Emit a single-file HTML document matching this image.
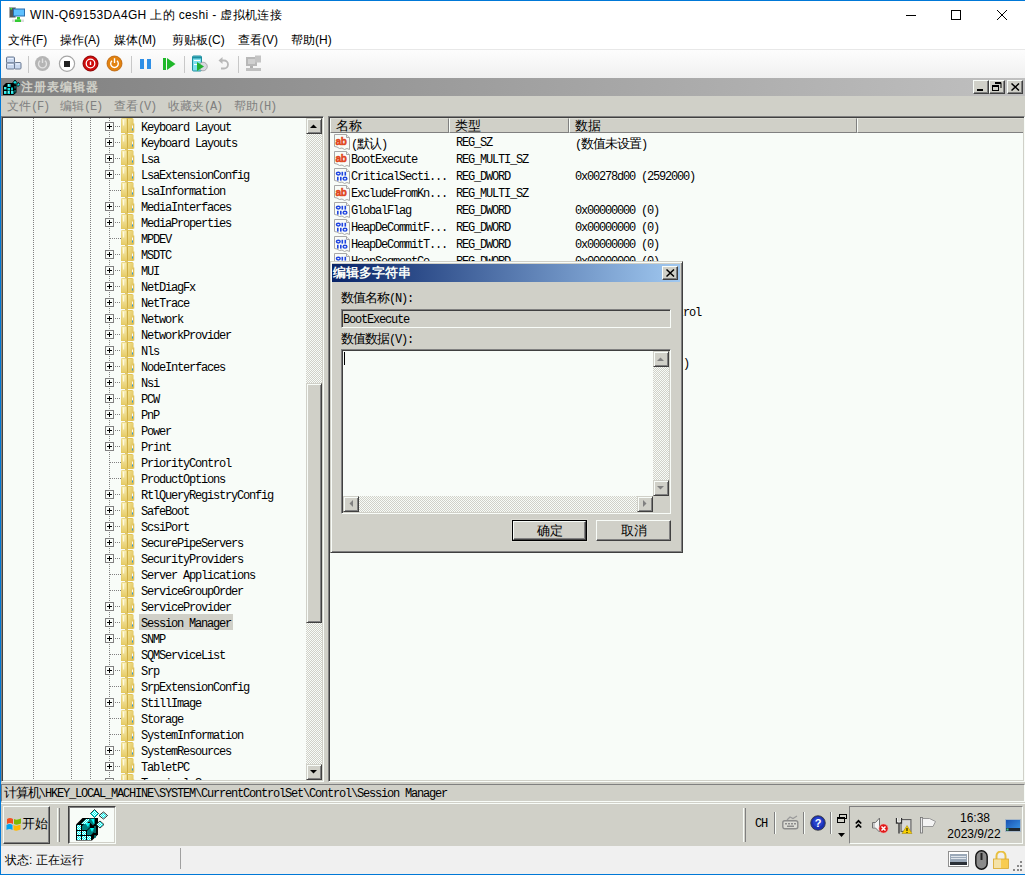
<!DOCTYPE html>
<html><head><meta charset="utf-8">
<style>
*{margin:0;padding:0;box-sizing:border-box}
html,body{width:1025px;height:875px;overflow:hidden;background:#fff;position:relative;font-family:"Liberation Sans",sans-serif;font-size:12px;color:#000}
div{position:absolute}
.a{position:absolute}
/* host window */
#bt{left:0;top:0;width:1025px;height:1px;background:#0078d7}
#bl{left:0;top:0;width:1px;height:875px;background:#0078d7}
#bb{left:0;top:874px;width:1025px;height:1px;background:#0078d7}
.ttl{left:30px;top:7px;font-size:12px;letter-spacing:0.35px;white-space:nowrap;line-height:16px}
.mi{top:32px;font-size:12px;white-space:nowrap;line-height:16px}
#tb{left:1px;top:49px;width:1024px;height:29px;background:linear-gradient(#fdfdfd,#f0f0f0);border-top:1px solid #e8e8e8}
.tsep{top:56px;width:1px;height:17px;background:#c8c8c8}
/* vm */
#vm{left:1px;top:78px;width:1024px;height:768px;background:#d0d0c8;overflow:hidden}
.sunk{border:1px solid;border-color:#808080 #f8fcf8 #f8fcf8 #808080;box-shadow:inset 1px 1px #404040,inset -1px -1px #d0d0c8}
.rais{background:#d0d0c8;border:1px solid;border-color:#d0d0c8 #404040 #404040 #d0d0c8;box-shadow:inset 1px 1px #f8fcf8,inset -1px -1px #808080}
.push{background:#d0d0c8;border:1px solid;border-color:#f8fcf8 #404040 #404040 #f8fcf8;box-shadow:inset -1px -1px #808080}
.chk{background:repeating-conic-gradient(#d0d0c8 0 25%,#f8fcf8 0 50%) 0 0/2px 2px}
.mono{font-family:"Liberation Mono",monospace;font-size:12px;letter-spacing:-1.2px;white-space:nowrap;line-height:16px}
.pbox{left:105px;width:9px;height:9px;border:1px solid #808080;background:#f8fcf8}
.pbox:before{content:"";position:absolute;left:1px;top:3px;width:5px;height:1px;background:#000}
.pbox:after{content:"";position:absolute;left:3px;top:1px;width:1px;height:5px;background:#000}
.hdot{height:1px;background:repeating-linear-gradient(90deg,#808080 0 1px,transparent 1px 2px)}
.vdot{width:1px;background:repeating-linear-gradient(180deg,#808080 0 1px,transparent 1px 2px)}
.fold{left:121px;width:16px;height:16px}
.fold svg{position:absolute;left:0;top:0}
.ti{left:139px;height:16px;padding:0 2px;font-family:"Liberation Mono",monospace;font-size:12px;letter-spacing:-1.2px;white-space:nowrap;line-height:16px}
.ti.sel{background:#d0d0c8}
.li-ic{left:334px;width:16px;height:16px}
.lt{font-family:"Liberation Mono",monospace;font-size:12px;letter-spacing:-1.2px;white-space:nowrap;line-height:17px;height:17px}
.cjk{font-family:"Liberation Sans",sans-serif;font-size:13px;letter-spacing:-1px}
.hdx{top:118px;height:15px;font-size:12px;line-height:15px;padding-left:7px;white-space:nowrap}
.m{font-family:"Liberation Mono",monospace;font-size:12px;letter-spacing:-1.2px;white-space:nowrap}
.rmenu{top:98px;color:#808080;line-height:16px;white-space:nowrap}
.hdr{top:118px;height:15px;background:#d0d0c8;border-style:solid;border-width:1px;border-color:#dcdcd4 #808080 #808080 #f8fcf8;padding-left:5px;line-height:13px;font-size:13px;white-space:nowrap}
</style></head><body>
<div id="bt"></div><div id="bl"></div><div id="bb"></div>
<!-- title bar -->
<div class="a" style="left:9px;top:7px;width:16px;height:16px">
<svg width="16" height="16" viewBox="0 0 16 16"><rect x="0.5" y="0.5" width="6" height="10" fill="#555" stroke="#aaa" stroke-width="0.6"/><rect x="1.5" y="1" width="1.5" height="1.5" fill="#3f3"/><rect x="4" y="1.5" width="12" height="8" fill="#2a6fb0"/><rect x="5" y="2.5" width="10" height="6" fill="#5ec0ff"/><rect x="8" y="10" width="3" height="3" fill="#3c3"/><rect x="3" y="12.5" width="12" height="2.5" fill="#ddd"/><rect x="6" y="12.5" width="6" height="2.5" fill="#3c3"/></svg></div>
<div class="a ttl">WIN-Q69153DA4GH 上的 ceshi - 虚拟机连接</div>
<div class="a" style="left:906px;top:15px;width:10px;height:1px;background:#000"></div>
<div class="a" style="left:951px;top:10px;width:10px;height:10px;border:1px solid #000"></div>
<div class="a" style="left:996px;top:9px;width:12px;height:12px"><svg width="12" height="12"><path d="M1 1L11 11M11 1L1 11" stroke="#000" stroke-width="1"/></svg></div>
<!-- menu -->
<div class="a mi" style="left:8px">文件(F)</div>
<div class="a mi" style="left:60px">操作(A)</div>
<div class="a mi" style="left:114px">媒体(M)</div>
<div class="a mi" style="left:172px">剪贴板(C)</div>
<div class="a mi" style="left:238px">查看(V)</div>
<div class="a mi" style="left:291px">帮助(H)</div>
<!-- toolbar -->
<div id="tb"></div>
<div class="a" style="left:6px;top:56px;width:16px;height:14px"><svg width="16" height="14" viewBox="0 0 16 14"><rect x="0.5" y="1" width="8" height="6" rx="1" fill="#c9d8ef" stroke="#6b7a92"/><rect x="0.5" y="7" width="8" height="6" rx="1" fill="#c9d8ef" stroke="#6b7a92"/><rect x="8.5" y="6.5" width="6.5" height="6.5" rx="1" fill="#c9d8ef" stroke="#6b7a92"/><rect x="2" y="2" width="5" height="1" fill="#eef4ff"/><rect x="2" y="8" width="5" height="1" fill="#eef4ff"/><rect x="10" y="7.5" width="4" height="1" fill="#eef4ff"/></svg></div>
<div class="a tsep" style="left:28px"></div>
<div class="a" style="left:34px;top:55px;width:17px;height:17px"><svg width="17" height="17" viewBox="0 0 17 17"><circle cx="8.5" cy="8.5" r="7.5" fill="#b5b5b5"/><path d="M6 5.8a4 4 0 1 0 5 0" fill="none" stroke="#e2e2e2" stroke-width="1.4"/><path d="M8.5 3.5v4.5" stroke="#e2e2e2" stroke-width="1.4"/></svg></div>
<div class="a" style="left:58px;top:55px;width:18px;height:18px"><svg width="18" height="18" viewBox="0 0 18 18"><circle cx="9" cy="8.8" r="7.6" fill="#fff" stroke="#a6a6a6" stroke-width="1.2"/><rect x="6" y="6" width="6" height="6" fill="#222"/></svg></div>
<div class="a" style="left:82px;top:55px;width:17px;height:17px"><svg width="17" height="17" viewBox="0 0 17 17"><circle cx="8.5" cy="8.5" r="7.5" fill="#cf0a0a" stroke="#8a0000" stroke-width="1"/><circle cx="8.5" cy="8.5" r="4.3" fill="none" stroke="#fff" stroke-width="1.3"/><rect x="7.8" y="6.5" width="1.4" height="3.5" fill="#fff"/></svg></div>
<div class="a" style="left:106px;top:55px;width:17px;height:17px"><svg width="17" height="17" viewBox="0 0 17 17"><circle cx="8.5" cy="8.5" r="7.5" fill="#e2820f" stroke="#b86008" stroke-width="0.8"/><path d="M6 5.8a3.8 3.8 0 1 0 5 0" fill="none" stroke="#fff" stroke-width="1.4"/><path d="M8.5 3.2v4.8" stroke="#fff" stroke-width="1.4"/></svg></div>
<div class="a tsep" style="left:131px"></div>
<div class="a" style="left:140px;top:59px;width:4px;height:10px;background:#2f8fe6"></div>
<div class="a" style="left:147px;top:59px;width:4px;height:10px;background:#2f8fe6"></div>
<div class="a" style="left:163px;top:58px;width:13px;height:12px"><svg width="13" height="12" viewBox="0 0 13 12"><rect x="0" y="0" width="3" height="12" fill="#1fb82a"/><path d="M4 0l8.5 6L4 12z" fill="#1fb82a"/></svg></div>
<div class="a tsep" style="left:184px"></div>
<div class="a" style="left:191px;top:55px;width:17px;height:17px"><svg width="17" height="17" viewBox="0 0 17 17"><rect x="1.5" y="1" width="9" height="15" rx="1" fill="#7fe0ee" stroke="#1f8fa0"/><rect x="2" y="1.5" width="8" height="2" fill="#1f8fa0"/><rect x="3" y="5" width="6" height="1" fill="#fff"/><rect x="3" y="9" width="6" height="1" fill="#fff"/><circle cx="12" cy="11.5" r="4.3" fill="#d8d8e0" stroke="#888" stroke-width="0.6"/><path d="M6 7l7 4.5L6 16z" fill="#22b030"/></svg></div>
<div class="a" style="left:218px;top:56px;width:12px;height:15px"><svg width="12" height="15" viewBox="0 0 12 15"><path d="M3 4.5h3a4 4 0 0 1 0 8H3" fill="none" stroke="#b8b8b8" stroke-width="1.8"/><path d="M0.5 4.5l4-3.5v7z" fill="#b8b8b8"/></svg></div>
<div class="a tsep" style="left:238px"></div>
<div class="a" style="left:245px;top:55px;width:17px;height:17px"><svg width="17" height="17" viewBox="0 0 17 17"><rect x="1" y="2" width="11" height="9" fill="#b8b8b8"/><rect x="3" y="4" width="7" height="5" fill="#d0d0d0"/><rect x="10" y="0.5" width="6" height="7" fill="#c4c4c4"/><rect x="5" y="11" width="3" height="2" fill="#b0b0b0"/><rect x="1" y="13" width="15" height="3" fill="#c0c0c0"/></svg></div>

<!-- VM -->
<div id="vm"></div>
<!-- reg title -->
<div class="a" style="left:1px;top:78px;width:1024px;height:18px;background:linear-gradient(90deg,#808080,#c0c0c0)"></div>
<div class="a" style="left:3px;top:79px;width:17px;height:17px"><svg width="17" height="17" viewBox="0 0 17 17"><path d="M0 16V7l3-3h8l2.5 2v7.5L10.5 16z" fill="#000"/><rect x="1" y="8" width="2.5" height="2.5" fill="#10e0e0"/><rect x="4.5" y="5" width="3" height="3" fill="#10e0e0"/><rect x="1" y="12" width="2.5" height="3" fill="#10e0e0"/><rect x="4.5" y="12" width="2.5" height="3" fill="#10e0e0"/><rect x="8" y="12" width="2.5" height="3" fill="#10e0e0"/><rect x="4.5" y="9" width="2.5" height="2.5" fill="#10e0e0"/><rect x="8" y="8.5" width="2" height="3" fill="#10c8c8"/><rect x="11.5" y="7" width="1" height="2.5" fill="#10a0a0"/><rect x="11.5" y="11" width="1" height="2.5" fill="#10a0a0"/><path d="M10 3.5l2-2.5 2 2.5-2 2z" fill="#10e0e0" stroke="#000" stroke-width="0.9"/><path d="M13.5 6l2-2.5 1.5 2-2 2z" fill="#10e0e0" stroke="#000" stroke-width="0.9"/><rect x="1.5" y="8.5" width="1" height="1" fill="#fff"/><rect x="5" y="5.5" width="1" height="1" fill="#fff"/><rect x="1.5" y="12.5" width="1" height="1" fill="#fff"/><rect x="5" y="12.5" width="1" height="1" fill="#fff"/><rect x="8.5" y="12.5" width="1" height="1" fill="#fff"/></svg></div>
<div class="a" style="left:21px;top:80px;font-size:12px;font-weight:bold;color:#d0d0c8;line-height:14px;white-space:nowrap;letter-spacing:1px">注册表编辑器</div>
<div class="a push" style="left:973px;top:80px;width:16px;height:14px"><div class="a" style="left:3px;top:8px;width:6px;height:2px;background:#000"></div></div>
<div class="a push" style="left:989px;top:80px;width:16px;height:14px"><svg class="a" style="left:2px;top:1px" width="10" height="10" viewBox="0 0 10 10"><path d="M3 0.5h6v5.5M3 1.5h6" fill="none" stroke="#000"/><rect x="0.5" y="3.5" width="6" height="5" fill="none" stroke="#000"/><rect x="0" y="3" width="7" height="2" fill="#000"/></svg></div>
<div class="a push" style="left:1007px;top:80px;width:16px;height:14px"><svg class="a" style="left:3px;top:2px" width="9" height="8" viewBox="0 0 9 8"><path d="M0.5 0.5L8 7.5M8 0.5L0.5 7.5" stroke="#000" stroke-width="1.5"/></svg></div>
<!-- reg menu -->
<div class="a rmenu" style="left:7px">文件<span class="m">(F)</span></div>
<div class="a rmenu" style="left:60px">编辑<span class="m">(E)</span></div>
<div class="a rmenu" style="left:114px">查看<span class="m">(V)</span></div>
<div class="a rmenu" style="left:168px">收藏夹<span class="m">(A)</span></div>
<div class="a rmenu" style="left:234px">帮助<span class="m">(H)</span></div>
<!-- tree pane -->
<div class="a sunk" style="left:1px;top:116px;width:323px;height:666px;background:#f8fcf8"></div>
<div class="a vdot" style="left:33px;top:118px;height:662px"></div>
<div class="a vdot" style="left:71px;top:118px;height:662px"></div>
<div class="a vdot" style="left:90px;top:118px;height:662px"></div>
<div class="a vdot" style="left:109px;top:118px;height:662px"></div>
<div class="a" style="left:3px;top:118px;width:303px;height:662px;overflow:hidden">
<div class="a" style="left:-3px;top:-118px;width:400px;height:900px">
<div class="pbox" style="top:122px"></div>
<div class="hdot" style="top:126px;left:115px;width:6px"></div>
<div class="fold" style="top:118px"><svg width="16" height="17" viewBox="0 0 16 17"><defs><linearGradient id="fl" x1="0" y1="0" x2="0" y2="1"><stop offset="0" stop-color="#f7eeb8"/><stop offset="1" stop-color="#e6cc68"/></linearGradient><linearGradient id="fr" x1="0" y1="0" x2="1" y2="1"><stop offset="0" stop-color="#f2e290"/><stop offset="1" stop-color="#dcbc50"/></linearGradient></defs><path d="M0 1.5Q0 0 1.5 0H11Q12.5 0 12.5 1.5V15H0z" fill="#e2c558"/><path d="M0.5 1.5Q0.5 0.5 1.5 0.5H5.5L6 14.5H0.5z" fill="url(#fl)"/><rect x="2" y="1.5" width="1.2" height="6" fill="#fffbe6" opacity="0.9"/><path d="M6 0.5L7 1v13.5H6z" fill="#cfae44"/><path d="M7 1H11.5Q12 1 12 2V14.5H7z" fill="url(#fr)"/><rect x="12" y="5.5" width="1.3" height="9" fill="#dfc058"/><rect x="11" y="7.5" width="1" height="3" fill="#f4f8ff"/><rect x="11" y="10.5" width="1" height="2" fill="#2898e0"/><rect x="4" y="15" width="3" height="1.5" fill="#d8c070"/></svg></div>
<div class="ti" style="top:118px"><span style="position:relative;top:2px">Keyboard Layout</span></div>
<div class="pbox" style="top:138px"></div>
<div class="hdot" style="top:142px;left:115px;width:6px"></div>
<div class="fold" style="top:134px"><svg width="16" height="17" viewBox="0 0 16 17"><defs><linearGradient id="fl" x1="0" y1="0" x2="0" y2="1"><stop offset="0" stop-color="#f7eeb8"/><stop offset="1" stop-color="#e6cc68"/></linearGradient><linearGradient id="fr" x1="0" y1="0" x2="1" y2="1"><stop offset="0" stop-color="#f2e290"/><stop offset="1" stop-color="#dcbc50"/></linearGradient></defs><path d="M0 1.5Q0 0 1.5 0H11Q12.5 0 12.5 1.5V15H0z" fill="#e2c558"/><path d="M0.5 1.5Q0.5 0.5 1.5 0.5H5.5L6 14.5H0.5z" fill="url(#fl)"/><rect x="2" y="1.5" width="1.2" height="6" fill="#fffbe6" opacity="0.9"/><path d="M6 0.5L7 1v13.5H6z" fill="#cfae44"/><path d="M7 1H11.5Q12 1 12 2V14.5H7z" fill="url(#fr)"/><rect x="12" y="5.5" width="1.3" height="9" fill="#dfc058"/><rect x="11" y="7.5" width="1" height="3" fill="#f4f8ff"/><rect x="11" y="10.5" width="1" height="2" fill="#2898e0"/><rect x="4" y="15" width="3" height="1.5" fill="#d8c070"/></svg></div>
<div class="ti" style="top:134px"><span style="position:relative;top:2px">Keyboard Layouts</span></div>
<div class="pbox" style="top:154px"></div>
<div class="hdot" style="top:158px;left:115px;width:6px"></div>
<div class="fold" style="top:150px"><svg width="16" height="17" viewBox="0 0 16 17"><defs><linearGradient id="fl" x1="0" y1="0" x2="0" y2="1"><stop offset="0" stop-color="#f7eeb8"/><stop offset="1" stop-color="#e6cc68"/></linearGradient><linearGradient id="fr" x1="0" y1="0" x2="1" y2="1"><stop offset="0" stop-color="#f2e290"/><stop offset="1" stop-color="#dcbc50"/></linearGradient></defs><path d="M0 1.5Q0 0 1.5 0H11Q12.5 0 12.5 1.5V15H0z" fill="#e2c558"/><path d="M0.5 1.5Q0.5 0.5 1.5 0.5H5.5L6 14.5H0.5z" fill="url(#fl)"/><rect x="2" y="1.5" width="1.2" height="6" fill="#fffbe6" opacity="0.9"/><path d="M6 0.5L7 1v13.5H6z" fill="#cfae44"/><path d="M7 1H11.5Q12 1 12 2V14.5H7z" fill="url(#fr)"/><rect x="12" y="5.5" width="1.3" height="9" fill="#dfc058"/><rect x="11" y="7.5" width="1" height="3" fill="#f4f8ff"/><rect x="11" y="10.5" width="1" height="2" fill="#2898e0"/><rect x="4" y="15" width="3" height="1.5" fill="#d8c070"/></svg></div>
<div class="ti" style="top:150px"><span style="position:relative;top:2px">Lsa</span></div>
<div class="pbox" style="top:170px"></div>
<div class="hdot" style="top:174px;left:115px;width:6px"></div>
<div class="fold" style="top:166px"><svg width="16" height="17" viewBox="0 0 16 17"><defs><linearGradient id="fl" x1="0" y1="0" x2="0" y2="1"><stop offset="0" stop-color="#f7eeb8"/><stop offset="1" stop-color="#e6cc68"/></linearGradient><linearGradient id="fr" x1="0" y1="0" x2="1" y2="1"><stop offset="0" stop-color="#f2e290"/><stop offset="1" stop-color="#dcbc50"/></linearGradient></defs><path d="M0 1.5Q0 0 1.5 0H11Q12.5 0 12.5 1.5V15H0z" fill="#e2c558"/><path d="M0.5 1.5Q0.5 0.5 1.5 0.5H5.5L6 14.5H0.5z" fill="url(#fl)"/><rect x="2" y="1.5" width="1.2" height="6" fill="#fffbe6" opacity="0.9"/><path d="M6 0.5L7 1v13.5H6z" fill="#cfae44"/><path d="M7 1H11.5Q12 1 12 2V14.5H7z" fill="url(#fr)"/><rect x="12" y="5.5" width="1.3" height="9" fill="#dfc058"/><rect x="11" y="7.5" width="1" height="3" fill="#f4f8ff"/><rect x="11" y="10.5" width="1" height="2" fill="#2898e0"/><rect x="4" y="15" width="3" height="1.5" fill="#d8c070"/></svg></div>
<div class="ti" style="top:166px"><span style="position:relative;top:2px">LsaExtensionConfig</span></div>
<div class="hdot" style="top:190px;left:110px;width:11px"></div>
<div class="fold" style="top:182px"><svg width="16" height="17" viewBox="0 0 16 17"><defs><linearGradient id="fl" x1="0" y1="0" x2="0" y2="1"><stop offset="0" stop-color="#f7eeb8"/><stop offset="1" stop-color="#e6cc68"/></linearGradient><linearGradient id="fr" x1="0" y1="0" x2="1" y2="1"><stop offset="0" stop-color="#f2e290"/><stop offset="1" stop-color="#dcbc50"/></linearGradient></defs><path d="M0 1.5Q0 0 1.5 0H11Q12.5 0 12.5 1.5V15H0z" fill="#e2c558"/><path d="M0.5 1.5Q0.5 0.5 1.5 0.5H5.5L6 14.5H0.5z" fill="url(#fl)"/><rect x="2" y="1.5" width="1.2" height="6" fill="#fffbe6" opacity="0.9"/><path d="M6 0.5L7 1v13.5H6z" fill="#cfae44"/><path d="M7 1H11.5Q12 1 12 2V14.5H7z" fill="url(#fr)"/><rect x="12" y="5.5" width="1.3" height="9" fill="#dfc058"/><rect x="11" y="7.5" width="1" height="3" fill="#f4f8ff"/><rect x="11" y="10.5" width="1" height="2" fill="#2898e0"/><rect x="4" y="15" width="3" height="1.5" fill="#d8c070"/></svg></div>
<div class="ti" style="top:182px"><span style="position:relative;top:2px">LsaInformation</span></div>
<div class="pbox" style="top:202px"></div>
<div class="hdot" style="top:206px;left:115px;width:6px"></div>
<div class="fold" style="top:198px"><svg width="16" height="17" viewBox="0 0 16 17"><defs><linearGradient id="fl" x1="0" y1="0" x2="0" y2="1"><stop offset="0" stop-color="#f7eeb8"/><stop offset="1" stop-color="#e6cc68"/></linearGradient><linearGradient id="fr" x1="0" y1="0" x2="1" y2="1"><stop offset="0" stop-color="#f2e290"/><stop offset="1" stop-color="#dcbc50"/></linearGradient></defs><path d="M0 1.5Q0 0 1.5 0H11Q12.5 0 12.5 1.5V15H0z" fill="#e2c558"/><path d="M0.5 1.5Q0.5 0.5 1.5 0.5H5.5L6 14.5H0.5z" fill="url(#fl)"/><rect x="2" y="1.5" width="1.2" height="6" fill="#fffbe6" opacity="0.9"/><path d="M6 0.5L7 1v13.5H6z" fill="#cfae44"/><path d="M7 1H11.5Q12 1 12 2V14.5H7z" fill="url(#fr)"/><rect x="12" y="5.5" width="1.3" height="9" fill="#dfc058"/><rect x="11" y="7.5" width="1" height="3" fill="#f4f8ff"/><rect x="11" y="10.5" width="1" height="2" fill="#2898e0"/><rect x="4" y="15" width="3" height="1.5" fill="#d8c070"/></svg></div>
<div class="ti" style="top:198px"><span style="position:relative;top:2px">MediaInterfaces</span></div>
<div class="pbox" style="top:218px"></div>
<div class="hdot" style="top:222px;left:115px;width:6px"></div>
<div class="fold" style="top:214px"><svg width="16" height="17" viewBox="0 0 16 17"><defs><linearGradient id="fl" x1="0" y1="0" x2="0" y2="1"><stop offset="0" stop-color="#f7eeb8"/><stop offset="1" stop-color="#e6cc68"/></linearGradient><linearGradient id="fr" x1="0" y1="0" x2="1" y2="1"><stop offset="0" stop-color="#f2e290"/><stop offset="1" stop-color="#dcbc50"/></linearGradient></defs><path d="M0 1.5Q0 0 1.5 0H11Q12.5 0 12.5 1.5V15H0z" fill="#e2c558"/><path d="M0.5 1.5Q0.5 0.5 1.5 0.5H5.5L6 14.5H0.5z" fill="url(#fl)"/><rect x="2" y="1.5" width="1.2" height="6" fill="#fffbe6" opacity="0.9"/><path d="M6 0.5L7 1v13.5H6z" fill="#cfae44"/><path d="M7 1H11.5Q12 1 12 2V14.5H7z" fill="url(#fr)"/><rect x="12" y="5.5" width="1.3" height="9" fill="#dfc058"/><rect x="11" y="7.5" width="1" height="3" fill="#f4f8ff"/><rect x="11" y="10.5" width="1" height="2" fill="#2898e0"/><rect x="4" y="15" width="3" height="1.5" fill="#d8c070"/></svg></div>
<div class="ti" style="top:214px"><span style="position:relative;top:2px">MediaProperties</span></div>
<div class="hdot" style="top:238px;left:110px;width:11px"></div>
<div class="fold" style="top:230px"><svg width="16" height="17" viewBox="0 0 16 17"><defs><linearGradient id="fl" x1="0" y1="0" x2="0" y2="1"><stop offset="0" stop-color="#f7eeb8"/><stop offset="1" stop-color="#e6cc68"/></linearGradient><linearGradient id="fr" x1="0" y1="0" x2="1" y2="1"><stop offset="0" stop-color="#f2e290"/><stop offset="1" stop-color="#dcbc50"/></linearGradient></defs><path d="M0 1.5Q0 0 1.5 0H11Q12.5 0 12.5 1.5V15H0z" fill="#e2c558"/><path d="M0.5 1.5Q0.5 0.5 1.5 0.5H5.5L6 14.5H0.5z" fill="url(#fl)"/><rect x="2" y="1.5" width="1.2" height="6" fill="#fffbe6" opacity="0.9"/><path d="M6 0.5L7 1v13.5H6z" fill="#cfae44"/><path d="M7 1H11.5Q12 1 12 2V14.5H7z" fill="url(#fr)"/><rect x="12" y="5.5" width="1.3" height="9" fill="#dfc058"/><rect x="11" y="7.5" width="1" height="3" fill="#f4f8ff"/><rect x="11" y="10.5" width="1" height="2" fill="#2898e0"/><rect x="4" y="15" width="3" height="1.5" fill="#d8c070"/></svg></div>
<div class="ti" style="top:230px"><span style="position:relative;top:2px">MPDEV</span></div>
<div class="pbox" style="top:250px"></div>
<div class="hdot" style="top:254px;left:115px;width:6px"></div>
<div class="fold" style="top:246px"><svg width="16" height="17" viewBox="0 0 16 17"><defs><linearGradient id="fl" x1="0" y1="0" x2="0" y2="1"><stop offset="0" stop-color="#f7eeb8"/><stop offset="1" stop-color="#e6cc68"/></linearGradient><linearGradient id="fr" x1="0" y1="0" x2="1" y2="1"><stop offset="0" stop-color="#f2e290"/><stop offset="1" stop-color="#dcbc50"/></linearGradient></defs><path d="M0 1.5Q0 0 1.5 0H11Q12.5 0 12.5 1.5V15H0z" fill="#e2c558"/><path d="M0.5 1.5Q0.5 0.5 1.5 0.5H5.5L6 14.5H0.5z" fill="url(#fl)"/><rect x="2" y="1.5" width="1.2" height="6" fill="#fffbe6" opacity="0.9"/><path d="M6 0.5L7 1v13.5H6z" fill="#cfae44"/><path d="M7 1H11.5Q12 1 12 2V14.5H7z" fill="url(#fr)"/><rect x="12" y="5.5" width="1.3" height="9" fill="#dfc058"/><rect x="11" y="7.5" width="1" height="3" fill="#f4f8ff"/><rect x="11" y="10.5" width="1" height="2" fill="#2898e0"/><rect x="4" y="15" width="3" height="1.5" fill="#d8c070"/></svg></div>
<div class="ti" style="top:246px"><span style="position:relative;top:2px">MSDTC</span></div>
<div class="pbox" style="top:266px"></div>
<div class="hdot" style="top:270px;left:115px;width:6px"></div>
<div class="fold" style="top:262px"><svg width="16" height="17" viewBox="0 0 16 17"><defs><linearGradient id="fl" x1="0" y1="0" x2="0" y2="1"><stop offset="0" stop-color="#f7eeb8"/><stop offset="1" stop-color="#e6cc68"/></linearGradient><linearGradient id="fr" x1="0" y1="0" x2="1" y2="1"><stop offset="0" stop-color="#f2e290"/><stop offset="1" stop-color="#dcbc50"/></linearGradient></defs><path d="M0 1.5Q0 0 1.5 0H11Q12.5 0 12.5 1.5V15H0z" fill="#e2c558"/><path d="M0.5 1.5Q0.5 0.5 1.5 0.5H5.5L6 14.5H0.5z" fill="url(#fl)"/><rect x="2" y="1.5" width="1.2" height="6" fill="#fffbe6" opacity="0.9"/><path d="M6 0.5L7 1v13.5H6z" fill="#cfae44"/><path d="M7 1H11.5Q12 1 12 2V14.5H7z" fill="url(#fr)"/><rect x="12" y="5.5" width="1.3" height="9" fill="#dfc058"/><rect x="11" y="7.5" width="1" height="3" fill="#f4f8ff"/><rect x="11" y="10.5" width="1" height="2" fill="#2898e0"/><rect x="4" y="15" width="3" height="1.5" fill="#d8c070"/></svg></div>
<div class="ti" style="top:262px"><span style="position:relative;top:2px">MUI</span></div>
<div class="pbox" style="top:282px"></div>
<div class="hdot" style="top:286px;left:115px;width:6px"></div>
<div class="fold" style="top:278px"><svg width="16" height="17" viewBox="0 0 16 17"><defs><linearGradient id="fl" x1="0" y1="0" x2="0" y2="1"><stop offset="0" stop-color="#f7eeb8"/><stop offset="1" stop-color="#e6cc68"/></linearGradient><linearGradient id="fr" x1="0" y1="0" x2="1" y2="1"><stop offset="0" stop-color="#f2e290"/><stop offset="1" stop-color="#dcbc50"/></linearGradient></defs><path d="M0 1.5Q0 0 1.5 0H11Q12.5 0 12.5 1.5V15H0z" fill="#e2c558"/><path d="M0.5 1.5Q0.5 0.5 1.5 0.5H5.5L6 14.5H0.5z" fill="url(#fl)"/><rect x="2" y="1.5" width="1.2" height="6" fill="#fffbe6" opacity="0.9"/><path d="M6 0.5L7 1v13.5H6z" fill="#cfae44"/><path d="M7 1H11.5Q12 1 12 2V14.5H7z" fill="url(#fr)"/><rect x="12" y="5.5" width="1.3" height="9" fill="#dfc058"/><rect x="11" y="7.5" width="1" height="3" fill="#f4f8ff"/><rect x="11" y="10.5" width="1" height="2" fill="#2898e0"/><rect x="4" y="15" width="3" height="1.5" fill="#d8c070"/></svg></div>
<div class="ti" style="top:278px"><span style="position:relative;top:2px">NetDiagFx</span></div>
<div class="pbox" style="top:298px"></div>
<div class="hdot" style="top:302px;left:115px;width:6px"></div>
<div class="fold" style="top:294px"><svg width="16" height="17" viewBox="0 0 16 17"><defs><linearGradient id="fl" x1="0" y1="0" x2="0" y2="1"><stop offset="0" stop-color="#f7eeb8"/><stop offset="1" stop-color="#e6cc68"/></linearGradient><linearGradient id="fr" x1="0" y1="0" x2="1" y2="1"><stop offset="0" stop-color="#f2e290"/><stop offset="1" stop-color="#dcbc50"/></linearGradient></defs><path d="M0 1.5Q0 0 1.5 0H11Q12.5 0 12.5 1.5V15H0z" fill="#e2c558"/><path d="M0.5 1.5Q0.5 0.5 1.5 0.5H5.5L6 14.5H0.5z" fill="url(#fl)"/><rect x="2" y="1.5" width="1.2" height="6" fill="#fffbe6" opacity="0.9"/><path d="M6 0.5L7 1v13.5H6z" fill="#cfae44"/><path d="M7 1H11.5Q12 1 12 2V14.5H7z" fill="url(#fr)"/><rect x="12" y="5.5" width="1.3" height="9" fill="#dfc058"/><rect x="11" y="7.5" width="1" height="3" fill="#f4f8ff"/><rect x="11" y="10.5" width="1" height="2" fill="#2898e0"/><rect x="4" y="15" width="3" height="1.5" fill="#d8c070"/></svg></div>
<div class="ti" style="top:294px"><span style="position:relative;top:2px">NetTrace</span></div>
<div class="pbox" style="top:314px"></div>
<div class="hdot" style="top:318px;left:115px;width:6px"></div>
<div class="fold" style="top:310px"><svg width="16" height="17" viewBox="0 0 16 17"><defs><linearGradient id="fl" x1="0" y1="0" x2="0" y2="1"><stop offset="0" stop-color="#f7eeb8"/><stop offset="1" stop-color="#e6cc68"/></linearGradient><linearGradient id="fr" x1="0" y1="0" x2="1" y2="1"><stop offset="0" stop-color="#f2e290"/><stop offset="1" stop-color="#dcbc50"/></linearGradient></defs><path d="M0 1.5Q0 0 1.5 0H11Q12.5 0 12.5 1.5V15H0z" fill="#e2c558"/><path d="M0.5 1.5Q0.5 0.5 1.5 0.5H5.5L6 14.5H0.5z" fill="url(#fl)"/><rect x="2" y="1.5" width="1.2" height="6" fill="#fffbe6" opacity="0.9"/><path d="M6 0.5L7 1v13.5H6z" fill="#cfae44"/><path d="M7 1H11.5Q12 1 12 2V14.5H7z" fill="url(#fr)"/><rect x="12" y="5.5" width="1.3" height="9" fill="#dfc058"/><rect x="11" y="7.5" width="1" height="3" fill="#f4f8ff"/><rect x="11" y="10.5" width="1" height="2" fill="#2898e0"/><rect x="4" y="15" width="3" height="1.5" fill="#d8c070"/></svg></div>
<div class="ti" style="top:310px"><span style="position:relative;top:2px">Network</span></div>
<div class="pbox" style="top:330px"></div>
<div class="hdot" style="top:334px;left:115px;width:6px"></div>
<div class="fold" style="top:326px"><svg width="16" height="17" viewBox="0 0 16 17"><defs><linearGradient id="fl" x1="0" y1="0" x2="0" y2="1"><stop offset="0" stop-color="#f7eeb8"/><stop offset="1" stop-color="#e6cc68"/></linearGradient><linearGradient id="fr" x1="0" y1="0" x2="1" y2="1"><stop offset="0" stop-color="#f2e290"/><stop offset="1" stop-color="#dcbc50"/></linearGradient></defs><path d="M0 1.5Q0 0 1.5 0H11Q12.5 0 12.5 1.5V15H0z" fill="#e2c558"/><path d="M0.5 1.5Q0.5 0.5 1.5 0.5H5.5L6 14.5H0.5z" fill="url(#fl)"/><rect x="2" y="1.5" width="1.2" height="6" fill="#fffbe6" opacity="0.9"/><path d="M6 0.5L7 1v13.5H6z" fill="#cfae44"/><path d="M7 1H11.5Q12 1 12 2V14.5H7z" fill="url(#fr)"/><rect x="12" y="5.5" width="1.3" height="9" fill="#dfc058"/><rect x="11" y="7.5" width="1" height="3" fill="#f4f8ff"/><rect x="11" y="10.5" width="1" height="2" fill="#2898e0"/><rect x="4" y="15" width="3" height="1.5" fill="#d8c070"/></svg></div>
<div class="ti" style="top:326px"><span style="position:relative;top:2px">NetworkProvider</span></div>
<div class="pbox" style="top:346px"></div>
<div class="hdot" style="top:350px;left:115px;width:6px"></div>
<div class="fold" style="top:342px"><svg width="16" height="17" viewBox="0 0 16 17"><defs><linearGradient id="fl" x1="0" y1="0" x2="0" y2="1"><stop offset="0" stop-color="#f7eeb8"/><stop offset="1" stop-color="#e6cc68"/></linearGradient><linearGradient id="fr" x1="0" y1="0" x2="1" y2="1"><stop offset="0" stop-color="#f2e290"/><stop offset="1" stop-color="#dcbc50"/></linearGradient></defs><path d="M0 1.5Q0 0 1.5 0H11Q12.5 0 12.5 1.5V15H0z" fill="#e2c558"/><path d="M0.5 1.5Q0.5 0.5 1.5 0.5H5.5L6 14.5H0.5z" fill="url(#fl)"/><rect x="2" y="1.5" width="1.2" height="6" fill="#fffbe6" opacity="0.9"/><path d="M6 0.5L7 1v13.5H6z" fill="#cfae44"/><path d="M7 1H11.5Q12 1 12 2V14.5H7z" fill="url(#fr)"/><rect x="12" y="5.5" width="1.3" height="9" fill="#dfc058"/><rect x="11" y="7.5" width="1" height="3" fill="#f4f8ff"/><rect x="11" y="10.5" width="1" height="2" fill="#2898e0"/><rect x="4" y="15" width="3" height="1.5" fill="#d8c070"/></svg></div>
<div class="ti" style="top:342px"><span style="position:relative;top:2px">Nls</span></div>
<div class="pbox" style="top:362px"></div>
<div class="hdot" style="top:366px;left:115px;width:6px"></div>
<div class="fold" style="top:358px"><svg width="16" height="17" viewBox="0 0 16 17"><defs><linearGradient id="fl" x1="0" y1="0" x2="0" y2="1"><stop offset="0" stop-color="#f7eeb8"/><stop offset="1" stop-color="#e6cc68"/></linearGradient><linearGradient id="fr" x1="0" y1="0" x2="1" y2="1"><stop offset="0" stop-color="#f2e290"/><stop offset="1" stop-color="#dcbc50"/></linearGradient></defs><path d="M0 1.5Q0 0 1.5 0H11Q12.5 0 12.5 1.5V15H0z" fill="#e2c558"/><path d="M0.5 1.5Q0.5 0.5 1.5 0.5H5.5L6 14.5H0.5z" fill="url(#fl)"/><rect x="2" y="1.5" width="1.2" height="6" fill="#fffbe6" opacity="0.9"/><path d="M6 0.5L7 1v13.5H6z" fill="#cfae44"/><path d="M7 1H11.5Q12 1 12 2V14.5H7z" fill="url(#fr)"/><rect x="12" y="5.5" width="1.3" height="9" fill="#dfc058"/><rect x="11" y="7.5" width="1" height="3" fill="#f4f8ff"/><rect x="11" y="10.5" width="1" height="2" fill="#2898e0"/><rect x="4" y="15" width="3" height="1.5" fill="#d8c070"/></svg></div>
<div class="ti" style="top:358px"><span style="position:relative;top:2px">NodeInterfaces</span></div>
<div class="pbox" style="top:378px"></div>
<div class="hdot" style="top:382px;left:115px;width:6px"></div>
<div class="fold" style="top:374px"><svg width="16" height="17" viewBox="0 0 16 17"><defs><linearGradient id="fl" x1="0" y1="0" x2="0" y2="1"><stop offset="0" stop-color="#f7eeb8"/><stop offset="1" stop-color="#e6cc68"/></linearGradient><linearGradient id="fr" x1="0" y1="0" x2="1" y2="1"><stop offset="0" stop-color="#f2e290"/><stop offset="1" stop-color="#dcbc50"/></linearGradient></defs><path d="M0 1.5Q0 0 1.5 0H11Q12.5 0 12.5 1.5V15H0z" fill="#e2c558"/><path d="M0.5 1.5Q0.5 0.5 1.5 0.5H5.5L6 14.5H0.5z" fill="url(#fl)"/><rect x="2" y="1.5" width="1.2" height="6" fill="#fffbe6" opacity="0.9"/><path d="M6 0.5L7 1v13.5H6z" fill="#cfae44"/><path d="M7 1H11.5Q12 1 12 2V14.5H7z" fill="url(#fr)"/><rect x="12" y="5.5" width="1.3" height="9" fill="#dfc058"/><rect x="11" y="7.5" width="1" height="3" fill="#f4f8ff"/><rect x="11" y="10.5" width="1" height="2" fill="#2898e0"/><rect x="4" y="15" width="3" height="1.5" fill="#d8c070"/></svg></div>
<div class="ti" style="top:374px"><span style="position:relative;top:2px">Nsi</span></div>
<div class="pbox" style="top:394px"></div>
<div class="hdot" style="top:398px;left:115px;width:6px"></div>
<div class="fold" style="top:390px"><svg width="16" height="17" viewBox="0 0 16 17"><defs><linearGradient id="fl" x1="0" y1="0" x2="0" y2="1"><stop offset="0" stop-color="#f7eeb8"/><stop offset="1" stop-color="#e6cc68"/></linearGradient><linearGradient id="fr" x1="0" y1="0" x2="1" y2="1"><stop offset="0" stop-color="#f2e290"/><stop offset="1" stop-color="#dcbc50"/></linearGradient></defs><path d="M0 1.5Q0 0 1.5 0H11Q12.5 0 12.5 1.5V15H0z" fill="#e2c558"/><path d="M0.5 1.5Q0.5 0.5 1.5 0.5H5.5L6 14.5H0.5z" fill="url(#fl)"/><rect x="2" y="1.5" width="1.2" height="6" fill="#fffbe6" opacity="0.9"/><path d="M6 0.5L7 1v13.5H6z" fill="#cfae44"/><path d="M7 1H11.5Q12 1 12 2V14.5H7z" fill="url(#fr)"/><rect x="12" y="5.5" width="1.3" height="9" fill="#dfc058"/><rect x="11" y="7.5" width="1" height="3" fill="#f4f8ff"/><rect x="11" y="10.5" width="1" height="2" fill="#2898e0"/><rect x="4" y="15" width="3" height="1.5" fill="#d8c070"/></svg></div>
<div class="ti" style="top:390px"><span style="position:relative;top:2px">PCW</span></div>
<div class="pbox" style="top:410px"></div>
<div class="hdot" style="top:414px;left:115px;width:6px"></div>
<div class="fold" style="top:406px"><svg width="16" height="17" viewBox="0 0 16 17"><defs><linearGradient id="fl" x1="0" y1="0" x2="0" y2="1"><stop offset="0" stop-color="#f7eeb8"/><stop offset="1" stop-color="#e6cc68"/></linearGradient><linearGradient id="fr" x1="0" y1="0" x2="1" y2="1"><stop offset="0" stop-color="#f2e290"/><stop offset="1" stop-color="#dcbc50"/></linearGradient></defs><path d="M0 1.5Q0 0 1.5 0H11Q12.5 0 12.5 1.5V15H0z" fill="#e2c558"/><path d="M0.5 1.5Q0.5 0.5 1.5 0.5H5.5L6 14.5H0.5z" fill="url(#fl)"/><rect x="2" y="1.5" width="1.2" height="6" fill="#fffbe6" opacity="0.9"/><path d="M6 0.5L7 1v13.5H6z" fill="#cfae44"/><path d="M7 1H11.5Q12 1 12 2V14.5H7z" fill="url(#fr)"/><rect x="12" y="5.5" width="1.3" height="9" fill="#dfc058"/><rect x="11" y="7.5" width="1" height="3" fill="#f4f8ff"/><rect x="11" y="10.5" width="1" height="2" fill="#2898e0"/><rect x="4" y="15" width="3" height="1.5" fill="#d8c070"/></svg></div>
<div class="ti" style="top:406px"><span style="position:relative;top:2px">PnP</span></div>
<div class="pbox" style="top:426px"></div>
<div class="hdot" style="top:430px;left:115px;width:6px"></div>
<div class="fold" style="top:422px"><svg width="16" height="17" viewBox="0 0 16 17"><defs><linearGradient id="fl" x1="0" y1="0" x2="0" y2="1"><stop offset="0" stop-color="#f7eeb8"/><stop offset="1" stop-color="#e6cc68"/></linearGradient><linearGradient id="fr" x1="0" y1="0" x2="1" y2="1"><stop offset="0" stop-color="#f2e290"/><stop offset="1" stop-color="#dcbc50"/></linearGradient></defs><path d="M0 1.5Q0 0 1.5 0H11Q12.5 0 12.5 1.5V15H0z" fill="#e2c558"/><path d="M0.5 1.5Q0.5 0.5 1.5 0.5H5.5L6 14.5H0.5z" fill="url(#fl)"/><rect x="2" y="1.5" width="1.2" height="6" fill="#fffbe6" opacity="0.9"/><path d="M6 0.5L7 1v13.5H6z" fill="#cfae44"/><path d="M7 1H11.5Q12 1 12 2V14.5H7z" fill="url(#fr)"/><rect x="12" y="5.5" width="1.3" height="9" fill="#dfc058"/><rect x="11" y="7.5" width="1" height="3" fill="#f4f8ff"/><rect x="11" y="10.5" width="1" height="2" fill="#2898e0"/><rect x="4" y="15" width="3" height="1.5" fill="#d8c070"/></svg></div>
<div class="ti" style="top:422px"><span style="position:relative;top:2px">Power</span></div>
<div class="pbox" style="top:442px"></div>
<div class="hdot" style="top:446px;left:115px;width:6px"></div>
<div class="fold" style="top:438px"><svg width="16" height="17" viewBox="0 0 16 17"><defs><linearGradient id="fl" x1="0" y1="0" x2="0" y2="1"><stop offset="0" stop-color="#f7eeb8"/><stop offset="1" stop-color="#e6cc68"/></linearGradient><linearGradient id="fr" x1="0" y1="0" x2="1" y2="1"><stop offset="0" stop-color="#f2e290"/><stop offset="1" stop-color="#dcbc50"/></linearGradient></defs><path d="M0 1.5Q0 0 1.5 0H11Q12.5 0 12.5 1.5V15H0z" fill="#e2c558"/><path d="M0.5 1.5Q0.5 0.5 1.5 0.5H5.5L6 14.5H0.5z" fill="url(#fl)"/><rect x="2" y="1.5" width="1.2" height="6" fill="#fffbe6" opacity="0.9"/><path d="M6 0.5L7 1v13.5H6z" fill="#cfae44"/><path d="M7 1H11.5Q12 1 12 2V14.5H7z" fill="url(#fr)"/><rect x="12" y="5.5" width="1.3" height="9" fill="#dfc058"/><rect x="11" y="7.5" width="1" height="3" fill="#f4f8ff"/><rect x="11" y="10.5" width="1" height="2" fill="#2898e0"/><rect x="4" y="15" width="3" height="1.5" fill="#d8c070"/></svg></div>
<div class="ti" style="top:438px"><span style="position:relative;top:2px">Print</span></div>
<div class="hdot" style="top:462px;left:110px;width:11px"></div>
<div class="fold" style="top:454px"><svg width="16" height="17" viewBox="0 0 16 17"><defs><linearGradient id="fl" x1="0" y1="0" x2="0" y2="1"><stop offset="0" stop-color="#f7eeb8"/><stop offset="1" stop-color="#e6cc68"/></linearGradient><linearGradient id="fr" x1="0" y1="0" x2="1" y2="1"><stop offset="0" stop-color="#f2e290"/><stop offset="1" stop-color="#dcbc50"/></linearGradient></defs><path d="M0 1.5Q0 0 1.5 0H11Q12.5 0 12.5 1.5V15H0z" fill="#e2c558"/><path d="M0.5 1.5Q0.5 0.5 1.5 0.5H5.5L6 14.5H0.5z" fill="url(#fl)"/><rect x="2" y="1.5" width="1.2" height="6" fill="#fffbe6" opacity="0.9"/><path d="M6 0.5L7 1v13.5H6z" fill="#cfae44"/><path d="M7 1H11.5Q12 1 12 2V14.5H7z" fill="url(#fr)"/><rect x="12" y="5.5" width="1.3" height="9" fill="#dfc058"/><rect x="11" y="7.5" width="1" height="3" fill="#f4f8ff"/><rect x="11" y="10.5" width="1" height="2" fill="#2898e0"/><rect x="4" y="15" width="3" height="1.5" fill="#d8c070"/></svg></div>
<div class="ti" style="top:454px"><span style="position:relative;top:2px">PriorityControl</span></div>
<div class="hdot" style="top:478px;left:110px;width:11px"></div>
<div class="fold" style="top:470px"><svg width="16" height="17" viewBox="0 0 16 17"><defs><linearGradient id="fl" x1="0" y1="0" x2="0" y2="1"><stop offset="0" stop-color="#f7eeb8"/><stop offset="1" stop-color="#e6cc68"/></linearGradient><linearGradient id="fr" x1="0" y1="0" x2="1" y2="1"><stop offset="0" stop-color="#f2e290"/><stop offset="1" stop-color="#dcbc50"/></linearGradient></defs><path d="M0 1.5Q0 0 1.5 0H11Q12.5 0 12.5 1.5V15H0z" fill="#e2c558"/><path d="M0.5 1.5Q0.5 0.5 1.5 0.5H5.5L6 14.5H0.5z" fill="url(#fl)"/><rect x="2" y="1.5" width="1.2" height="6" fill="#fffbe6" opacity="0.9"/><path d="M6 0.5L7 1v13.5H6z" fill="#cfae44"/><path d="M7 1H11.5Q12 1 12 2V14.5H7z" fill="url(#fr)"/><rect x="12" y="5.5" width="1.3" height="9" fill="#dfc058"/><rect x="11" y="7.5" width="1" height="3" fill="#f4f8ff"/><rect x="11" y="10.5" width="1" height="2" fill="#2898e0"/><rect x="4" y="15" width="3" height="1.5" fill="#d8c070"/></svg></div>
<div class="ti" style="top:470px"><span style="position:relative;top:2px">ProductOptions</span></div>
<div class="pbox" style="top:490px"></div>
<div class="hdot" style="top:494px;left:115px;width:6px"></div>
<div class="fold" style="top:486px"><svg width="16" height="17" viewBox="0 0 16 17"><defs><linearGradient id="fl" x1="0" y1="0" x2="0" y2="1"><stop offset="0" stop-color="#f7eeb8"/><stop offset="1" stop-color="#e6cc68"/></linearGradient><linearGradient id="fr" x1="0" y1="0" x2="1" y2="1"><stop offset="0" stop-color="#f2e290"/><stop offset="1" stop-color="#dcbc50"/></linearGradient></defs><path d="M0 1.5Q0 0 1.5 0H11Q12.5 0 12.5 1.5V15H0z" fill="#e2c558"/><path d="M0.5 1.5Q0.5 0.5 1.5 0.5H5.5L6 14.5H0.5z" fill="url(#fl)"/><rect x="2" y="1.5" width="1.2" height="6" fill="#fffbe6" opacity="0.9"/><path d="M6 0.5L7 1v13.5H6z" fill="#cfae44"/><path d="M7 1H11.5Q12 1 12 2V14.5H7z" fill="url(#fr)"/><rect x="12" y="5.5" width="1.3" height="9" fill="#dfc058"/><rect x="11" y="7.5" width="1" height="3" fill="#f4f8ff"/><rect x="11" y="10.5" width="1" height="2" fill="#2898e0"/><rect x="4" y="15" width="3" height="1.5" fill="#d8c070"/></svg></div>
<div class="ti" style="top:486px"><span style="position:relative;top:2px">RtlQueryRegistryConfig</span></div>
<div class="pbox" style="top:506px"></div>
<div class="hdot" style="top:510px;left:115px;width:6px"></div>
<div class="fold" style="top:502px"><svg width="16" height="17" viewBox="0 0 16 17"><defs><linearGradient id="fl" x1="0" y1="0" x2="0" y2="1"><stop offset="0" stop-color="#f7eeb8"/><stop offset="1" stop-color="#e6cc68"/></linearGradient><linearGradient id="fr" x1="0" y1="0" x2="1" y2="1"><stop offset="0" stop-color="#f2e290"/><stop offset="1" stop-color="#dcbc50"/></linearGradient></defs><path d="M0 1.5Q0 0 1.5 0H11Q12.5 0 12.5 1.5V15H0z" fill="#e2c558"/><path d="M0.5 1.5Q0.5 0.5 1.5 0.5H5.5L6 14.5H0.5z" fill="url(#fl)"/><rect x="2" y="1.5" width="1.2" height="6" fill="#fffbe6" opacity="0.9"/><path d="M6 0.5L7 1v13.5H6z" fill="#cfae44"/><path d="M7 1H11.5Q12 1 12 2V14.5H7z" fill="url(#fr)"/><rect x="12" y="5.5" width="1.3" height="9" fill="#dfc058"/><rect x="11" y="7.5" width="1" height="3" fill="#f4f8ff"/><rect x="11" y="10.5" width="1" height="2" fill="#2898e0"/><rect x="4" y="15" width="3" height="1.5" fill="#d8c070"/></svg></div>
<div class="ti" style="top:502px"><span style="position:relative;top:2px">SafeBoot</span></div>
<div class="pbox" style="top:522px"></div>
<div class="hdot" style="top:526px;left:115px;width:6px"></div>
<div class="fold" style="top:518px"><svg width="16" height="17" viewBox="0 0 16 17"><defs><linearGradient id="fl" x1="0" y1="0" x2="0" y2="1"><stop offset="0" stop-color="#f7eeb8"/><stop offset="1" stop-color="#e6cc68"/></linearGradient><linearGradient id="fr" x1="0" y1="0" x2="1" y2="1"><stop offset="0" stop-color="#f2e290"/><stop offset="1" stop-color="#dcbc50"/></linearGradient></defs><path d="M0 1.5Q0 0 1.5 0H11Q12.5 0 12.5 1.5V15H0z" fill="#e2c558"/><path d="M0.5 1.5Q0.5 0.5 1.5 0.5H5.5L6 14.5H0.5z" fill="url(#fl)"/><rect x="2" y="1.5" width="1.2" height="6" fill="#fffbe6" opacity="0.9"/><path d="M6 0.5L7 1v13.5H6z" fill="#cfae44"/><path d="M7 1H11.5Q12 1 12 2V14.5H7z" fill="url(#fr)"/><rect x="12" y="5.5" width="1.3" height="9" fill="#dfc058"/><rect x="11" y="7.5" width="1" height="3" fill="#f4f8ff"/><rect x="11" y="10.5" width="1" height="2" fill="#2898e0"/><rect x="4" y="15" width="3" height="1.5" fill="#d8c070"/></svg></div>
<div class="ti" style="top:518px"><span style="position:relative;top:2px">ScsiPort</span></div>
<div class="pbox" style="top:538px"></div>
<div class="hdot" style="top:542px;left:115px;width:6px"></div>
<div class="fold" style="top:534px"><svg width="16" height="17" viewBox="0 0 16 17"><defs><linearGradient id="fl" x1="0" y1="0" x2="0" y2="1"><stop offset="0" stop-color="#f7eeb8"/><stop offset="1" stop-color="#e6cc68"/></linearGradient><linearGradient id="fr" x1="0" y1="0" x2="1" y2="1"><stop offset="0" stop-color="#f2e290"/><stop offset="1" stop-color="#dcbc50"/></linearGradient></defs><path d="M0 1.5Q0 0 1.5 0H11Q12.5 0 12.5 1.5V15H0z" fill="#e2c558"/><path d="M0.5 1.5Q0.5 0.5 1.5 0.5H5.5L6 14.5H0.5z" fill="url(#fl)"/><rect x="2" y="1.5" width="1.2" height="6" fill="#fffbe6" opacity="0.9"/><path d="M6 0.5L7 1v13.5H6z" fill="#cfae44"/><path d="M7 1H11.5Q12 1 12 2V14.5H7z" fill="url(#fr)"/><rect x="12" y="5.5" width="1.3" height="9" fill="#dfc058"/><rect x="11" y="7.5" width="1" height="3" fill="#f4f8ff"/><rect x="11" y="10.5" width="1" height="2" fill="#2898e0"/><rect x="4" y="15" width="3" height="1.5" fill="#d8c070"/></svg></div>
<div class="ti" style="top:534px"><span style="position:relative;top:2px">SecurePipeServers</span></div>
<div class="pbox" style="top:554px"></div>
<div class="hdot" style="top:558px;left:115px;width:6px"></div>
<div class="fold" style="top:550px"><svg width="16" height="17" viewBox="0 0 16 17"><defs><linearGradient id="fl" x1="0" y1="0" x2="0" y2="1"><stop offset="0" stop-color="#f7eeb8"/><stop offset="1" stop-color="#e6cc68"/></linearGradient><linearGradient id="fr" x1="0" y1="0" x2="1" y2="1"><stop offset="0" stop-color="#f2e290"/><stop offset="1" stop-color="#dcbc50"/></linearGradient></defs><path d="M0 1.5Q0 0 1.5 0H11Q12.5 0 12.5 1.5V15H0z" fill="#e2c558"/><path d="M0.5 1.5Q0.5 0.5 1.5 0.5H5.5L6 14.5H0.5z" fill="url(#fl)"/><rect x="2" y="1.5" width="1.2" height="6" fill="#fffbe6" opacity="0.9"/><path d="M6 0.5L7 1v13.5H6z" fill="#cfae44"/><path d="M7 1H11.5Q12 1 12 2V14.5H7z" fill="url(#fr)"/><rect x="12" y="5.5" width="1.3" height="9" fill="#dfc058"/><rect x="11" y="7.5" width="1" height="3" fill="#f4f8ff"/><rect x="11" y="10.5" width="1" height="2" fill="#2898e0"/><rect x="4" y="15" width="3" height="1.5" fill="#d8c070"/></svg></div>
<div class="ti" style="top:550px"><span style="position:relative;top:2px">SecurityProviders</span></div>
<div class="hdot" style="top:574px;left:110px;width:11px"></div>
<div class="fold" style="top:566px"><svg width="16" height="17" viewBox="0 0 16 17"><defs><linearGradient id="fl" x1="0" y1="0" x2="0" y2="1"><stop offset="0" stop-color="#f7eeb8"/><stop offset="1" stop-color="#e6cc68"/></linearGradient><linearGradient id="fr" x1="0" y1="0" x2="1" y2="1"><stop offset="0" stop-color="#f2e290"/><stop offset="1" stop-color="#dcbc50"/></linearGradient></defs><path d="M0 1.5Q0 0 1.5 0H11Q12.5 0 12.5 1.5V15H0z" fill="#e2c558"/><path d="M0.5 1.5Q0.5 0.5 1.5 0.5H5.5L6 14.5H0.5z" fill="url(#fl)"/><rect x="2" y="1.5" width="1.2" height="6" fill="#fffbe6" opacity="0.9"/><path d="M6 0.5L7 1v13.5H6z" fill="#cfae44"/><path d="M7 1H11.5Q12 1 12 2V14.5H7z" fill="url(#fr)"/><rect x="12" y="5.5" width="1.3" height="9" fill="#dfc058"/><rect x="11" y="7.5" width="1" height="3" fill="#f4f8ff"/><rect x="11" y="10.5" width="1" height="2" fill="#2898e0"/><rect x="4" y="15" width="3" height="1.5" fill="#d8c070"/></svg></div>
<div class="ti" style="top:566px"><span style="position:relative;top:2px">Server Applications</span></div>
<div class="hdot" style="top:590px;left:110px;width:11px"></div>
<div class="fold" style="top:582px"><svg width="16" height="17" viewBox="0 0 16 17"><defs><linearGradient id="fl" x1="0" y1="0" x2="0" y2="1"><stop offset="0" stop-color="#f7eeb8"/><stop offset="1" stop-color="#e6cc68"/></linearGradient><linearGradient id="fr" x1="0" y1="0" x2="1" y2="1"><stop offset="0" stop-color="#f2e290"/><stop offset="1" stop-color="#dcbc50"/></linearGradient></defs><path d="M0 1.5Q0 0 1.5 0H11Q12.5 0 12.5 1.5V15H0z" fill="#e2c558"/><path d="M0.5 1.5Q0.5 0.5 1.5 0.5H5.5L6 14.5H0.5z" fill="url(#fl)"/><rect x="2" y="1.5" width="1.2" height="6" fill="#fffbe6" opacity="0.9"/><path d="M6 0.5L7 1v13.5H6z" fill="#cfae44"/><path d="M7 1H11.5Q12 1 12 2V14.5H7z" fill="url(#fr)"/><rect x="12" y="5.5" width="1.3" height="9" fill="#dfc058"/><rect x="11" y="7.5" width="1" height="3" fill="#f4f8ff"/><rect x="11" y="10.5" width="1" height="2" fill="#2898e0"/><rect x="4" y="15" width="3" height="1.5" fill="#d8c070"/></svg></div>
<div class="ti" style="top:582px"><span style="position:relative;top:2px">ServiceGroupOrder</span></div>
<div class="pbox" style="top:602px"></div>
<div class="hdot" style="top:606px;left:115px;width:6px"></div>
<div class="fold" style="top:598px"><svg width="16" height="17" viewBox="0 0 16 17"><defs><linearGradient id="fl" x1="0" y1="0" x2="0" y2="1"><stop offset="0" stop-color="#f7eeb8"/><stop offset="1" stop-color="#e6cc68"/></linearGradient><linearGradient id="fr" x1="0" y1="0" x2="1" y2="1"><stop offset="0" stop-color="#f2e290"/><stop offset="1" stop-color="#dcbc50"/></linearGradient></defs><path d="M0 1.5Q0 0 1.5 0H11Q12.5 0 12.5 1.5V15H0z" fill="#e2c558"/><path d="M0.5 1.5Q0.5 0.5 1.5 0.5H5.5L6 14.5H0.5z" fill="url(#fl)"/><rect x="2" y="1.5" width="1.2" height="6" fill="#fffbe6" opacity="0.9"/><path d="M6 0.5L7 1v13.5H6z" fill="#cfae44"/><path d="M7 1H11.5Q12 1 12 2V14.5H7z" fill="url(#fr)"/><rect x="12" y="5.5" width="1.3" height="9" fill="#dfc058"/><rect x="11" y="7.5" width="1" height="3" fill="#f4f8ff"/><rect x="11" y="10.5" width="1" height="2" fill="#2898e0"/><rect x="4" y="15" width="3" height="1.5" fill="#d8c070"/></svg></div>
<div class="ti" style="top:598px"><span style="position:relative;top:2px">ServiceProvider</span></div>
<div class="pbox" style="top:618px"></div>
<div class="hdot" style="top:622px;left:115px;width:6px"></div>
<div class="fold" style="top:614px"><svg width="16" height="17" viewBox="0 0 16 17"><defs><linearGradient id="fl" x1="0" y1="0" x2="0" y2="1"><stop offset="0" stop-color="#f7eeb8"/><stop offset="1" stop-color="#e6cc68"/></linearGradient><linearGradient id="fr" x1="0" y1="0" x2="1" y2="1"><stop offset="0" stop-color="#f2e290"/><stop offset="1" stop-color="#dcbc50"/></linearGradient></defs><path d="M0 1.5Q0 0 1.5 0H11Q12.5 0 12.5 1.5V15H0z" fill="#e2c558"/><path d="M0.5 1.5Q0.5 0.5 1.5 0.5H5.5L6 14.5H0.5z" fill="url(#fl)"/><rect x="2" y="1.5" width="1.2" height="6" fill="#fffbe6" opacity="0.9"/><path d="M6 0.5L7 1v13.5H6z" fill="#cfae44"/><path d="M7 1H11.5Q12 1 12 2V14.5H7z" fill="url(#fr)"/><rect x="12" y="5.5" width="1.3" height="9" fill="#dfc058"/><rect x="11" y="7.5" width="1" height="3" fill="#f4f8ff"/><rect x="11" y="10.5" width="1" height="2" fill="#2898e0"/><rect x="4" y="15" width="3" height="1.5" fill="#d8c070"/></svg></div>
<div class="ti sel" style="top:614px"><span style="position:relative;top:2px">Session Manager</span></div>
<div class="pbox" style="top:634px"></div>
<div class="hdot" style="top:638px;left:115px;width:6px"></div>
<div class="fold" style="top:630px"><svg width="16" height="17" viewBox="0 0 16 17"><defs><linearGradient id="fl" x1="0" y1="0" x2="0" y2="1"><stop offset="0" stop-color="#f7eeb8"/><stop offset="1" stop-color="#e6cc68"/></linearGradient><linearGradient id="fr" x1="0" y1="0" x2="1" y2="1"><stop offset="0" stop-color="#f2e290"/><stop offset="1" stop-color="#dcbc50"/></linearGradient></defs><path d="M0 1.5Q0 0 1.5 0H11Q12.5 0 12.5 1.5V15H0z" fill="#e2c558"/><path d="M0.5 1.5Q0.5 0.5 1.5 0.5H5.5L6 14.5H0.5z" fill="url(#fl)"/><rect x="2" y="1.5" width="1.2" height="6" fill="#fffbe6" opacity="0.9"/><path d="M6 0.5L7 1v13.5H6z" fill="#cfae44"/><path d="M7 1H11.5Q12 1 12 2V14.5H7z" fill="url(#fr)"/><rect x="12" y="5.5" width="1.3" height="9" fill="#dfc058"/><rect x="11" y="7.5" width="1" height="3" fill="#f4f8ff"/><rect x="11" y="10.5" width="1" height="2" fill="#2898e0"/><rect x="4" y="15" width="3" height="1.5" fill="#d8c070"/></svg></div>
<div class="ti" style="top:630px"><span style="position:relative;top:2px">SNMP</span></div>
<div class="hdot" style="top:654px;left:110px;width:11px"></div>
<div class="fold" style="top:646px"><svg width="16" height="17" viewBox="0 0 16 17"><defs><linearGradient id="fl" x1="0" y1="0" x2="0" y2="1"><stop offset="0" stop-color="#f7eeb8"/><stop offset="1" stop-color="#e6cc68"/></linearGradient><linearGradient id="fr" x1="0" y1="0" x2="1" y2="1"><stop offset="0" stop-color="#f2e290"/><stop offset="1" stop-color="#dcbc50"/></linearGradient></defs><path d="M0 1.5Q0 0 1.5 0H11Q12.5 0 12.5 1.5V15H0z" fill="#e2c558"/><path d="M0.5 1.5Q0.5 0.5 1.5 0.5H5.5L6 14.5H0.5z" fill="url(#fl)"/><rect x="2" y="1.5" width="1.2" height="6" fill="#fffbe6" opacity="0.9"/><path d="M6 0.5L7 1v13.5H6z" fill="#cfae44"/><path d="M7 1H11.5Q12 1 12 2V14.5H7z" fill="url(#fr)"/><rect x="12" y="5.5" width="1.3" height="9" fill="#dfc058"/><rect x="11" y="7.5" width="1" height="3" fill="#f4f8ff"/><rect x="11" y="10.5" width="1" height="2" fill="#2898e0"/><rect x="4" y="15" width="3" height="1.5" fill="#d8c070"/></svg></div>
<div class="ti" style="top:646px"><span style="position:relative;top:2px">SQMServiceList</span></div>
<div class="pbox" style="top:666px"></div>
<div class="hdot" style="top:670px;left:115px;width:6px"></div>
<div class="fold" style="top:662px"><svg width="16" height="17" viewBox="0 0 16 17"><defs><linearGradient id="fl" x1="0" y1="0" x2="0" y2="1"><stop offset="0" stop-color="#f7eeb8"/><stop offset="1" stop-color="#e6cc68"/></linearGradient><linearGradient id="fr" x1="0" y1="0" x2="1" y2="1"><stop offset="0" stop-color="#f2e290"/><stop offset="1" stop-color="#dcbc50"/></linearGradient></defs><path d="M0 1.5Q0 0 1.5 0H11Q12.5 0 12.5 1.5V15H0z" fill="#e2c558"/><path d="M0.5 1.5Q0.5 0.5 1.5 0.5H5.5L6 14.5H0.5z" fill="url(#fl)"/><rect x="2" y="1.5" width="1.2" height="6" fill="#fffbe6" opacity="0.9"/><path d="M6 0.5L7 1v13.5H6z" fill="#cfae44"/><path d="M7 1H11.5Q12 1 12 2V14.5H7z" fill="url(#fr)"/><rect x="12" y="5.5" width="1.3" height="9" fill="#dfc058"/><rect x="11" y="7.5" width="1" height="3" fill="#f4f8ff"/><rect x="11" y="10.5" width="1" height="2" fill="#2898e0"/><rect x="4" y="15" width="3" height="1.5" fill="#d8c070"/></svg></div>
<div class="ti" style="top:662px"><span style="position:relative;top:2px">Srp</span></div>
<div class="hdot" style="top:686px;left:110px;width:11px"></div>
<div class="fold" style="top:678px"><svg width="16" height="17" viewBox="0 0 16 17"><defs><linearGradient id="fl" x1="0" y1="0" x2="0" y2="1"><stop offset="0" stop-color="#f7eeb8"/><stop offset="1" stop-color="#e6cc68"/></linearGradient><linearGradient id="fr" x1="0" y1="0" x2="1" y2="1"><stop offset="0" stop-color="#f2e290"/><stop offset="1" stop-color="#dcbc50"/></linearGradient></defs><path d="M0 1.5Q0 0 1.5 0H11Q12.5 0 12.5 1.5V15H0z" fill="#e2c558"/><path d="M0.5 1.5Q0.5 0.5 1.5 0.5H5.5L6 14.5H0.5z" fill="url(#fl)"/><rect x="2" y="1.5" width="1.2" height="6" fill="#fffbe6" opacity="0.9"/><path d="M6 0.5L7 1v13.5H6z" fill="#cfae44"/><path d="M7 1H11.5Q12 1 12 2V14.5H7z" fill="url(#fr)"/><rect x="12" y="5.5" width="1.3" height="9" fill="#dfc058"/><rect x="11" y="7.5" width="1" height="3" fill="#f4f8ff"/><rect x="11" y="10.5" width="1" height="2" fill="#2898e0"/><rect x="4" y="15" width="3" height="1.5" fill="#d8c070"/></svg></div>
<div class="ti" style="top:678px"><span style="position:relative;top:2px">SrpExtensionConfig</span></div>
<div class="pbox" style="top:698px"></div>
<div class="hdot" style="top:702px;left:115px;width:6px"></div>
<div class="fold" style="top:694px"><svg width="16" height="17" viewBox="0 0 16 17"><defs><linearGradient id="fl" x1="0" y1="0" x2="0" y2="1"><stop offset="0" stop-color="#f7eeb8"/><stop offset="1" stop-color="#e6cc68"/></linearGradient><linearGradient id="fr" x1="0" y1="0" x2="1" y2="1"><stop offset="0" stop-color="#f2e290"/><stop offset="1" stop-color="#dcbc50"/></linearGradient></defs><path d="M0 1.5Q0 0 1.5 0H11Q12.5 0 12.5 1.5V15H0z" fill="#e2c558"/><path d="M0.5 1.5Q0.5 0.5 1.5 0.5H5.5L6 14.5H0.5z" fill="url(#fl)"/><rect x="2" y="1.5" width="1.2" height="6" fill="#fffbe6" opacity="0.9"/><path d="M6 0.5L7 1v13.5H6z" fill="#cfae44"/><path d="M7 1H11.5Q12 1 12 2V14.5H7z" fill="url(#fr)"/><rect x="12" y="5.5" width="1.3" height="9" fill="#dfc058"/><rect x="11" y="7.5" width="1" height="3" fill="#f4f8ff"/><rect x="11" y="10.5" width="1" height="2" fill="#2898e0"/><rect x="4" y="15" width="3" height="1.5" fill="#d8c070"/></svg></div>
<div class="ti" style="top:694px"><span style="position:relative;top:2px">StillImage</span></div>
<div class="hdot" style="top:718px;left:110px;width:11px"></div>
<div class="fold" style="top:710px"><svg width="16" height="17" viewBox="0 0 16 17"><defs><linearGradient id="fl" x1="0" y1="0" x2="0" y2="1"><stop offset="0" stop-color="#f7eeb8"/><stop offset="1" stop-color="#e6cc68"/></linearGradient><linearGradient id="fr" x1="0" y1="0" x2="1" y2="1"><stop offset="0" stop-color="#f2e290"/><stop offset="1" stop-color="#dcbc50"/></linearGradient></defs><path d="M0 1.5Q0 0 1.5 0H11Q12.5 0 12.5 1.5V15H0z" fill="#e2c558"/><path d="M0.5 1.5Q0.5 0.5 1.5 0.5H5.5L6 14.5H0.5z" fill="url(#fl)"/><rect x="2" y="1.5" width="1.2" height="6" fill="#fffbe6" opacity="0.9"/><path d="M6 0.5L7 1v13.5H6z" fill="#cfae44"/><path d="M7 1H11.5Q12 1 12 2V14.5H7z" fill="url(#fr)"/><rect x="12" y="5.5" width="1.3" height="9" fill="#dfc058"/><rect x="11" y="7.5" width="1" height="3" fill="#f4f8ff"/><rect x="11" y="10.5" width="1" height="2" fill="#2898e0"/><rect x="4" y="15" width="3" height="1.5" fill="#d8c070"/></svg></div>
<div class="ti" style="top:710px"><span style="position:relative;top:2px">Storage</span></div>
<div class="hdot" style="top:734px;left:110px;width:11px"></div>
<div class="fold" style="top:726px"><svg width="16" height="17" viewBox="0 0 16 17"><defs><linearGradient id="fl" x1="0" y1="0" x2="0" y2="1"><stop offset="0" stop-color="#f7eeb8"/><stop offset="1" stop-color="#e6cc68"/></linearGradient><linearGradient id="fr" x1="0" y1="0" x2="1" y2="1"><stop offset="0" stop-color="#f2e290"/><stop offset="1" stop-color="#dcbc50"/></linearGradient></defs><path d="M0 1.5Q0 0 1.5 0H11Q12.5 0 12.5 1.5V15H0z" fill="#e2c558"/><path d="M0.5 1.5Q0.5 0.5 1.5 0.5H5.5L6 14.5H0.5z" fill="url(#fl)"/><rect x="2" y="1.5" width="1.2" height="6" fill="#fffbe6" opacity="0.9"/><path d="M6 0.5L7 1v13.5H6z" fill="#cfae44"/><path d="M7 1H11.5Q12 1 12 2V14.5H7z" fill="url(#fr)"/><rect x="12" y="5.5" width="1.3" height="9" fill="#dfc058"/><rect x="11" y="7.5" width="1" height="3" fill="#f4f8ff"/><rect x="11" y="10.5" width="1" height="2" fill="#2898e0"/><rect x="4" y="15" width="3" height="1.5" fill="#d8c070"/></svg></div>
<div class="ti" style="top:726px"><span style="position:relative;top:2px">SystemInformation</span></div>
<div class="pbox" style="top:746px"></div>
<div class="hdot" style="top:750px;left:115px;width:6px"></div>
<div class="fold" style="top:742px"><svg width="16" height="17" viewBox="0 0 16 17"><defs><linearGradient id="fl" x1="0" y1="0" x2="0" y2="1"><stop offset="0" stop-color="#f7eeb8"/><stop offset="1" stop-color="#e6cc68"/></linearGradient><linearGradient id="fr" x1="0" y1="0" x2="1" y2="1"><stop offset="0" stop-color="#f2e290"/><stop offset="1" stop-color="#dcbc50"/></linearGradient></defs><path d="M0 1.5Q0 0 1.5 0H11Q12.5 0 12.5 1.5V15H0z" fill="#e2c558"/><path d="M0.5 1.5Q0.5 0.5 1.5 0.5H5.5L6 14.5H0.5z" fill="url(#fl)"/><rect x="2" y="1.5" width="1.2" height="6" fill="#fffbe6" opacity="0.9"/><path d="M6 0.5L7 1v13.5H6z" fill="#cfae44"/><path d="M7 1H11.5Q12 1 12 2V14.5H7z" fill="url(#fr)"/><rect x="12" y="5.5" width="1.3" height="9" fill="#dfc058"/><rect x="11" y="7.5" width="1" height="3" fill="#f4f8ff"/><rect x="11" y="10.5" width="1" height="2" fill="#2898e0"/><rect x="4" y="15" width="3" height="1.5" fill="#d8c070"/></svg></div>
<div class="ti" style="top:742px"><span style="position:relative;top:2px">SystemResources</span></div>
<div class="pbox" style="top:762px"></div>
<div class="hdot" style="top:766px;left:115px;width:6px"></div>
<div class="fold" style="top:758px"><svg width="16" height="17" viewBox="0 0 16 17"><defs><linearGradient id="fl" x1="0" y1="0" x2="0" y2="1"><stop offset="0" stop-color="#f7eeb8"/><stop offset="1" stop-color="#e6cc68"/></linearGradient><linearGradient id="fr" x1="0" y1="0" x2="1" y2="1"><stop offset="0" stop-color="#f2e290"/><stop offset="1" stop-color="#dcbc50"/></linearGradient></defs><path d="M0 1.5Q0 0 1.5 0H11Q12.5 0 12.5 1.5V15H0z" fill="#e2c558"/><path d="M0.5 1.5Q0.5 0.5 1.5 0.5H5.5L6 14.5H0.5z" fill="url(#fl)"/><rect x="2" y="1.5" width="1.2" height="6" fill="#fffbe6" opacity="0.9"/><path d="M6 0.5L7 1v13.5H6z" fill="#cfae44"/><path d="M7 1H11.5Q12 1 12 2V14.5H7z" fill="url(#fr)"/><rect x="12" y="5.5" width="1.3" height="9" fill="#dfc058"/><rect x="11" y="7.5" width="1" height="3" fill="#f4f8ff"/><rect x="11" y="10.5" width="1" height="2" fill="#2898e0"/><rect x="4" y="15" width="3" height="1.5" fill="#d8c070"/></svg></div>
<div class="ti" style="top:758px"><span style="position:relative;top:2px">TabletPC</span></div>
<div class="pbox" style="top:778px"></div>
<div class="hdot" style="top:782px;left:115px;width:6px"></div>
<div class="fold" style="top:774px"><svg width="16" height="17" viewBox="0 0 16 17"><defs><linearGradient id="fl" x1="0" y1="0" x2="0" y2="1"><stop offset="0" stop-color="#f7eeb8"/><stop offset="1" stop-color="#e6cc68"/></linearGradient><linearGradient id="fr" x1="0" y1="0" x2="1" y2="1"><stop offset="0" stop-color="#f2e290"/><stop offset="1" stop-color="#dcbc50"/></linearGradient></defs><path d="M0 1.5Q0 0 1.5 0H11Q12.5 0 12.5 1.5V15H0z" fill="#e2c558"/><path d="M0.5 1.5Q0.5 0.5 1.5 0.5H5.5L6 14.5H0.5z" fill="url(#fl)"/><rect x="2" y="1.5" width="1.2" height="6" fill="#fffbe6" opacity="0.9"/><path d="M6 0.5L7 1v13.5H6z" fill="#cfae44"/><path d="M7 1H11.5Q12 1 12 2V14.5H7z" fill="url(#fr)"/><rect x="12" y="5.5" width="1.3" height="9" fill="#dfc058"/><rect x="11" y="7.5" width="1" height="3" fill="#f4f8ff"/><rect x="11" y="10.5" width="1" height="2" fill="#2898e0"/><rect x="4" y="15" width="3" height="1.5" fill="#d8c070"/></svg></div>
<div class="ti" style="top:774px"><span style="position:relative;top:2px">Terminal Server</span></div>
</div></div>
<!-- tree scrollbar -->
<div class="a chk" style="left:306px;top:118px;width:16px;height:662px"></div>
<div class="a rais" style="left:306px;top:118px;width:16px;height:16px"><svg class="a" style="left:3px;top:4px" width="8" height="6"><path d="M0 5h7L3.5 1.5z" fill="#000"/></svg></div>
<div class="a rais" style="left:306px;top:764px;width:16px;height:16px"><svg class="a" style="left:3px;top:5px" width="8" height="6"><path d="M0 0h7L3.5 3.5z" fill="#000"/></svg></div>
<div class="a rais" style="left:306px;top:383px;width:16px;height:240px"></div>
<!-- list pane -->
<div class="a sunk" style="left:328px;top:116px;width:697px;height:666px;background:#f8fcf8"></div>
<div class="a hdr" style="left:330px;width:119px">名称</div>
<div class="a hdr" style="left:449px;width:120px">类型</div>
<div class="a hdr" style="left:569px;width:288px">数据</div>
<div class="a hdr" style="left:857px;width:166px;border-right:0"></div>
<div class="a" style="left:330px;top:133px;width:693px;height:647px;overflow:hidden">
<div class="a" style="left:-330px;top:-133px;width:1025px;height:900px">
<div class="li-ic" style="top:134px"><svg width="16" height="16" viewBox="0 0 16 16"><path d="M0.5 0.5H12.5L15.5 3.5V15.5L13 14.5L10.5 15.5L8 14L5.5 14.5L3 13L0.5 12.5Z" fill="#f8fcf8" stroke="#a8a8a8"/><path d="M12.5 0.5V3.5H15.5" fill="#eee" stroke="#a8a8a8"/><text x="1.6" y="10.6" font-family="Liberation Sans" font-weight="bold" font-size="10" fill="#e04418" stroke="#e04418" stroke-width="0.45" letter-spacing="-0.3">ab</text></svg></div>
<div class="lt" style="top:135px;left:351px">(<span class=cjk>默认</span>)</div>
<div class="lt" style="top:135px;left:456px">REG_SZ</div>
<div class="lt" style="top:135px;left:575px">(<span class=cjk>数值未设置</span>)</div>
<div class="li-ic" style="top:151px"><svg width="16" height="16" viewBox="0 0 16 16"><path d="M0.5 0.5H12.5L15.5 3.5V15.5L13 14.5L10.5 15.5L8 14L5.5 14.5L3 13L0.5 12.5Z" fill="#f8fcf8" stroke="#a8a8a8"/><path d="M12.5 0.5V3.5H15.5" fill="#eee" stroke="#a8a8a8"/><text x="1.6" y="10.6" font-family="Liberation Sans" font-weight="bold" font-size="10" fill="#e04418" stroke="#e04418" stroke-width="0.45" letter-spacing="-0.3">ab</text></svg></div>
<div class="lt" style="top:152px;left:351px">BootExecute</div>
<div class="lt" style="top:152px;left:456px">REG_MULTI_SZ</div>
<div class="lt" style="top:152px;left:575px"></div>
<div class="li-ic" style="top:168px"><svg width="16" height="16" viewBox="0 0 16 16"><path d="M0.5 0.5H12.5L15.5 3.5V15.5L13 14.5L10.5 15.5L8 14L5.5 14.5L3 13L0.5 12.5Z" fill="#f8fcf8" stroke="#a8a8a8"/><path d="M12.5 0.5V3.5H15.5" fill="#eee" stroke="#a8a8a8"/><ellipse cx="4.3" cy="5.6" rx="1.9" ry="1.4" fill="none" stroke="#1e44e0" stroke-width="1.4"/><rect x="7.5" y="3.8" width="1.6" height="3.8" fill="#1e44e0"/><rect x="10.5" y="3.8" width="1.6" height="3.8" fill="#1e44e0"/><rect x="3" y="8.8" width="1.6" height="3.8" fill="#1e44e0"/><rect x="6" y="8.8" width="1.6" height="3.8" fill="#1e44e0"/><ellipse cx="11" cy="10.7" rx="1.9" ry="1.4" fill="none" stroke="#1e44e0" stroke-width="1.4"/></svg></div>
<div class="lt" style="top:169px;left:351px">CriticalSecti...</div>
<div class="lt" style="top:169px;left:456px">REG_DWORD</div>
<div class="lt" style="top:169px;left:575px">0x00278d00 (2592000)</div>
<div class="li-ic" style="top:185px"><svg width="16" height="16" viewBox="0 0 16 16"><path d="M0.5 0.5H12.5L15.5 3.5V15.5L13 14.5L10.5 15.5L8 14L5.5 14.5L3 13L0.5 12.5Z" fill="#f8fcf8" stroke="#a8a8a8"/><path d="M12.5 0.5V3.5H15.5" fill="#eee" stroke="#a8a8a8"/><text x="1.6" y="10.6" font-family="Liberation Sans" font-weight="bold" font-size="10" fill="#e04418" stroke="#e04418" stroke-width="0.45" letter-spacing="-0.3">ab</text></svg></div>
<div class="lt" style="top:186px;left:351px">ExcludeFromKn...</div>
<div class="lt" style="top:186px;left:456px">REG_MULTI_SZ</div>
<div class="lt" style="top:186px;left:575px"></div>
<div class="li-ic" style="top:202px"><svg width="16" height="16" viewBox="0 0 16 16"><path d="M0.5 0.5H12.5L15.5 3.5V15.5L13 14.5L10.5 15.5L8 14L5.5 14.5L3 13L0.5 12.5Z" fill="#f8fcf8" stroke="#a8a8a8"/><path d="M12.5 0.5V3.5H15.5" fill="#eee" stroke="#a8a8a8"/><ellipse cx="4.3" cy="5.6" rx="1.9" ry="1.4" fill="none" stroke="#1e44e0" stroke-width="1.4"/><rect x="7.5" y="3.8" width="1.6" height="3.8" fill="#1e44e0"/><rect x="10.5" y="3.8" width="1.6" height="3.8" fill="#1e44e0"/><rect x="3" y="8.8" width="1.6" height="3.8" fill="#1e44e0"/><rect x="6" y="8.8" width="1.6" height="3.8" fill="#1e44e0"/><ellipse cx="11" cy="10.7" rx="1.9" ry="1.4" fill="none" stroke="#1e44e0" stroke-width="1.4"/></svg></div>
<div class="lt" style="top:203px;left:351px">GlobalFlag</div>
<div class="lt" style="top:203px;left:456px">REG_DWORD</div>
<div class="lt" style="top:203px;left:575px">0x00000000 (0)</div>
<div class="li-ic" style="top:219px"><svg width="16" height="16" viewBox="0 0 16 16"><path d="M0.5 0.5H12.5L15.5 3.5V15.5L13 14.5L10.5 15.5L8 14L5.5 14.5L3 13L0.5 12.5Z" fill="#f8fcf8" stroke="#a8a8a8"/><path d="M12.5 0.5V3.5H15.5" fill="#eee" stroke="#a8a8a8"/><ellipse cx="4.3" cy="5.6" rx="1.9" ry="1.4" fill="none" stroke="#1e44e0" stroke-width="1.4"/><rect x="7.5" y="3.8" width="1.6" height="3.8" fill="#1e44e0"/><rect x="10.5" y="3.8" width="1.6" height="3.8" fill="#1e44e0"/><rect x="3" y="8.8" width="1.6" height="3.8" fill="#1e44e0"/><rect x="6" y="8.8" width="1.6" height="3.8" fill="#1e44e0"/><ellipse cx="11" cy="10.7" rx="1.9" ry="1.4" fill="none" stroke="#1e44e0" stroke-width="1.4"/></svg></div>
<div class="lt" style="top:220px;left:351px">HeapDeCommitF...</div>
<div class="lt" style="top:220px;left:456px">REG_DWORD</div>
<div class="lt" style="top:220px;left:575px">0x00000000 (0)</div>
<div class="li-ic" style="top:236px"><svg width="16" height="16" viewBox="0 0 16 16"><path d="M0.5 0.5H12.5L15.5 3.5V15.5L13 14.5L10.5 15.5L8 14L5.5 14.5L3 13L0.5 12.5Z" fill="#f8fcf8" stroke="#a8a8a8"/><path d="M12.5 0.5V3.5H15.5" fill="#eee" stroke="#a8a8a8"/><ellipse cx="4.3" cy="5.6" rx="1.9" ry="1.4" fill="none" stroke="#1e44e0" stroke-width="1.4"/><rect x="7.5" y="3.8" width="1.6" height="3.8" fill="#1e44e0"/><rect x="10.5" y="3.8" width="1.6" height="3.8" fill="#1e44e0"/><rect x="3" y="8.8" width="1.6" height="3.8" fill="#1e44e0"/><rect x="6" y="8.8" width="1.6" height="3.8" fill="#1e44e0"/><ellipse cx="11" cy="10.7" rx="1.9" ry="1.4" fill="none" stroke="#1e44e0" stroke-width="1.4"/></svg></div>
<div class="lt" style="top:237px;left:351px">HeapDeCommitT...</div>
<div class="lt" style="top:237px;left:456px">REG_DWORD</div>
<div class="lt" style="top:237px;left:575px">0x00000000 (0)</div>
<div class="li-ic" style="top:253px"><svg width="16" height="16" viewBox="0 0 16 16"><path d="M0.5 0.5H12.5L15.5 3.5V15.5L13 14.5L10.5 15.5L8 14L5.5 14.5L3 13L0.5 12.5Z" fill="#f8fcf8" stroke="#a8a8a8"/><path d="M12.5 0.5V3.5H15.5" fill="#eee" stroke="#a8a8a8"/><ellipse cx="4.3" cy="5.6" rx="1.9" ry="1.4" fill="none" stroke="#1e44e0" stroke-width="1.4"/><rect x="7.5" y="3.8" width="1.6" height="3.8" fill="#1e44e0"/><rect x="10.5" y="3.8" width="1.6" height="3.8" fill="#1e44e0"/><rect x="3" y="8.8" width="1.6" height="3.8" fill="#1e44e0"/><rect x="6" y="8.8" width="1.6" height="3.8" fill="#1e44e0"/><ellipse cx="11" cy="10.7" rx="1.9" ry="1.4" fill="none" stroke="#1e44e0" stroke-width="1.4"/></svg></div>
<div class="lt" style="top:254px;left:351px">HeapSegmentCo...</div>
<div class="lt" style="top:254px;left:456px">REG_DWORD</div>
<div class="lt" style="top:254px;left:575px">0x00000000 (0)</div>
<div class="li-ic" style="top:270px"><svg width="16" height="16" viewBox="0 0 16 16"><path d="M0.5 0.5H12.5L15.5 3.5V15.5L13 14.5L10.5 15.5L8 14L5.5 14.5L3 13L0.5 12.5Z" fill="#f8fcf8" stroke="#a8a8a8"/><path d="M12.5 0.5V3.5H15.5" fill="#eee" stroke="#a8a8a8"/><ellipse cx="4.3" cy="5.6" rx="1.9" ry="1.4" fill="none" stroke="#1e44e0" stroke-width="1.4"/><rect x="7.5" y="3.8" width="1.6" height="3.8" fill="#1e44e0"/><rect x="10.5" y="3.8" width="1.6" height="3.8" fill="#1e44e0"/><rect x="3" y="8.8" width="1.6" height="3.8" fill="#1e44e0"/><rect x="6" y="8.8" width="1.6" height="3.8" fill="#1e44e0"/><ellipse cx="11" cy="10.7" rx="1.9" ry="1.4" fill="none" stroke="#1e44e0" stroke-width="1.4"/></svg></div>
<div class="lt" style="top:271px;left:351px">HeapSegmentRe...</div>
<div class="lt" style="top:271px;left:456px">REG_DWORD</div>
<div class="lt" style="top:271px;left:575px">0x00000000 (0)</div>
<div class="li-ic" style="top:287px"><svg width="16" height="16" viewBox="0 0 16 16"><path d="M0.5 0.5H12.5L15.5 3.5V15.5L13 14.5L10.5 15.5L8 14L5.5 14.5L3 13L0.5 12.5Z" fill="#f8fcf8" stroke="#a8a8a8"/><path d="M12.5 0.5V3.5H15.5" fill="#eee" stroke="#a8a8a8"/><ellipse cx="4.3" cy="5.6" rx="1.9" ry="1.4" fill="none" stroke="#1e44e0" stroke-width="1.4"/><rect x="7.5" y="3.8" width="1.6" height="3.8" fill="#1e44e0"/><rect x="10.5" y="3.8" width="1.6" height="3.8" fill="#1e44e0"/><rect x="3" y="8.8" width="1.6" height="3.8" fill="#1e44e0"/><rect x="6" y="8.8" width="1.6" height="3.8" fill="#1e44e0"/><ellipse cx="11" cy="10.7" rx="1.9" ry="1.4" fill="none" stroke="#1e44e0" stroke-width="1.4"/></svg></div>
<div class="lt" style="top:288px;left:351px">LockOverride...</div>
<div class="lt" style="top:288px;left:456px">REG_DWORD</div>
<div class="lt" style="top:288px;left:575px">0x00000000 (0)</div>
<div class="li-ic" style="top:304px"><svg width="16" height="16" viewBox="0 0 16 16"><path d="M0.5 0.5H12.5L15.5 3.5V15.5L13 14.5L10.5 15.5L8 14L5.5 14.5L3 13L0.5 12.5Z" fill="#f8fcf8" stroke="#a8a8a8"/><path d="M12.5 0.5V3.5H15.5" fill="#eee" stroke="#a8a8a8"/><text x="1.6" y="10.6" font-family="Liberation Sans" font-weight="bold" font-size="10" fill="#e04418" stroke="#e04418" stroke-width="0.45" letter-spacing="-0.3">ab</text></svg></div>
<div class="lt" style="top:305px;left:351px">ObjectDirecto...</div>
<div class="lt" style="top:305px;left:456px">REG_MULTI_SZ</div>
<div class="lt" style="top:305px;left:575px">\Windows \RPC Control</div>
<div class="li-ic" style="top:321px"><svg width="16" height="16" viewBox="0 0 16 16"><path d="M0.5 0.5H12.5L15.5 3.5V15.5L13 14.5L10.5 15.5L8 14L5.5 14.5L3 13L0.5 12.5Z" fill="#f8fcf8" stroke="#a8a8a8"/><path d="M12.5 0.5V3.5H15.5" fill="#eee" stroke="#a8a8a8"/><ellipse cx="4.3" cy="5.6" rx="1.9" ry="1.4" fill="none" stroke="#1e44e0" stroke-width="1.4"/><rect x="7.5" y="3.8" width="1.6" height="3.8" fill="#1e44e0"/><rect x="10.5" y="3.8" width="1.6" height="3.8" fill="#1e44e0"/><rect x="3" y="8.8" width="1.6" height="3.8" fill="#1e44e0"/><rect x="6" y="8.8" width="1.6" height="3.8" fill="#1e44e0"/><ellipse cx="11" cy="10.7" rx="1.9" ry="1.4" fill="none" stroke="#1e44e0" stroke-width="1.4"/></svg></div>
<div class="lt" style="top:322px;left:351px">ProcessorCont...</div>
<div class="lt" style="top:322px;left:456px">REG_DWORD</div>
<div class="lt" style="top:322px;left:575px">0x00000000 (0)</div>
<div class="li-ic" style="top:338px"><svg width="16" height="16" viewBox="0 0 16 16"><path d="M0.5 0.5H12.5L15.5 3.5V15.5L13 14.5L10.5 15.5L8 14L5.5 14.5L3 13L0.5 12.5Z" fill="#f8fcf8" stroke="#a8a8a8"/><path d="M12.5 0.5V3.5H15.5" fill="#eee" stroke="#a8a8a8"/><text x="1.6" y="10.6" font-family="Liberation Sans" font-weight="bold" font-size="10" fill="#e04418" stroke="#e04418" stroke-width="0.45" letter-spacing="-0.3">ab</text></svg></div>
<div class="lt" style="top:339px;left:351px">ProtectionMode</div>
<div class="lt" style="top:339px;left:456px">REG_DWORD</div>
<div class="lt" style="top:339px;left:575px">0x00000001 (1)</div>
<div class="li-ic" style="top:355px"><svg width="16" height="16" viewBox="0 0 16 16"><path d="M0.5 0.5H12.5L15.5 3.5V15.5L13 14.5L10.5 15.5L8 14L5.5 14.5L3 13L0.5 12.5Z" fill="#f8fcf8" stroke="#a8a8a8"/><path d="M12.5 0.5V3.5H15.5" fill="#eee" stroke="#a8a8a8"/><ellipse cx="4.3" cy="5.6" rx="1.9" ry="1.4" fill="none" stroke="#1e44e0" stroke-width="1.4"/><rect x="7.5" y="3.8" width="1.6" height="3.8" fill="#1e44e0"/><rect x="10.5" y="3.8" width="1.6" height="3.8" fill="#1e44e0"/><rect x="3" y="8.8" width="1.6" height="3.8" fill="#1e44e0"/><rect x="6" y="8.8" width="1.6" height="3.8" fill="#1e44e0"/><ellipse cx="11" cy="10.7" rx="1.9" ry="1.4" fill="none" stroke="#1e44e0" stroke-width="1.4"/></svg></div>
<div class="lt" style="top:356px;left:351px">ResourceTimeo...</div>
<div class="lt" style="top:356px;left:456px">REG_DWORD</div>
<div class="lt" style="top:356px;left:575px">0x000927c0 (60000 )</div>
</div></div>
<!-- path status -->
<div class="a" style="left:1px;top:784px;width:1024px;height:18px;border:1px solid;border-color:#808080 #f8fcf8 #f8fcf8 #808080"></div>
<div class="a" style="left:4px;top:786px;white-space:nowrap;line-height:14px"><span class="cjk">计算机</span><span style="margin-left:-1px"></span><span class="m">\HKEY_LOCAL_MACHINE\SYSTEM\CurrentControlSet\Control\Session Manager</span></div>
<!-- taskbar -->
<div class="a" style="left:1px;top:803px;width:1024px;height:1px;background:#f8fcf8"></div>
<div class="a push" style="left:3px;top:806px;width:47px;height:38px"></div>
<div class="a" style="left:6px;top:816px;width:16px;height:16px"><svg width="16" height="16" viewBox="0 0 16 16"><path d="M1 3q3-2 6 0v5q-3-2-6 0z" fill="#f25022"/><path d="M8 3q3 1.5 7-0.5v5q-4 2-7 0.5z" fill="#7fba00"/><path d="M0.5 9q3-2 6 0v5q-3-2-6 0z" fill="#00a4ef"/><path d="M7.5 9q3 1.5 7-0.5v5q-4 2-7 0.5z" fill="#ffb900"/></svg></div>
<div class="a" style="left:22px;top:816px;font-size:13px;line-height:16px;white-space:nowrap">开始</div>
<div class="a" style="left:57px;top:808px;width:3px;height:34px;border-left:1px solid #f8fcf8;border-right:1px solid #808080"></div>
<div class="a" style="left:68px;top:806px;width:48px;height:38px;border:1px solid;border-color:#404040 #f8fcf8 #f8fcf8 #404040;box-shadow:inset 1px 1px #808080,inset -1px -1px #d0d0c8;background:#f8fcf8"></div>
<div class="a" style="left:76px;top:809px;width:32px;height:32px"><svg width="32" height="32" viewBox="0 0 32 32"><defs><pattern id="dp" width="2" height="2" patternUnits="userSpaceOnUse"><rect width="2" height="2" fill="#00f8f8"/><rect width="1" height="1" fill="#f8fcf8"/><rect x="1" y="1" width="1" height="1" fill="#f8fcf8"/></pattern></defs>
<path d="M0 31.5V15.5L6.5 9H22V25.5L16 31.5z" fill="#000"/>
<rect x="1" y="16" width="4" height="5" fill="url(#dp)"/><rect x="1" y="22" width="4" height="4" fill="url(#dp)"/><rect x="1" y="27" width="4" height="4" fill="url(#dp)"/>
<rect x="6" y="22" width="4" height="4" fill="url(#dp)"/><rect x="6" y="27" width="4" height="4" fill="url(#dp)"/><rect x="11" y="27" width="4" height="4" fill="url(#dp)"/>
<path d="M6 21V17l3-3h5v4l-3 3z" fill="#008080"/><path d="M9 14l3 4 2-4z" fill="#00f8f8"/>
<path d="M11 26v-4l3-3h4v4l-3 3z" fill="#008080"/><path d="M14 19l2 4 2-4z" fill="#00f8f8"/>
<path d="M5 15l5-5h5l-5 5z" fill="url(#dp)"/><path d="M13 9.5h6v5l-2 2-4-4z" fill="#008080"/><path d="M15 10l3 5v-5z" fill="#00f8f8"/>
<path d="M19 17v7M19 26v3" stroke="#008080" stroke-width="1.5"/>
<path d="M14.5 4.5l4-4 4 4-4 4z" fill="url(#dp)" stroke="#000" stroke-width="0.8"/><path d="M18.5 8.5l4-4 0 0" fill="none"/><path d="M14.5 4.5l4 4v0l4-4" fill="none" stroke="#008080" stroke-width="1"/>
<path d="M23 6.5l4.5-3.5 4 3.5-4 3.5z" fill="url(#dp)" stroke="#000" stroke-width="0.8"/>
<path d="M20 15.5l4-3.5 4 3.5-4 3.5z" fill="url(#dp)" stroke="#000" stroke-width="0.8"/>
</svg></div>

<div class="a" style="left:743px;top:808px;width:3px;height:34px;border-left:1px solid #f8fcf8;border-right:1px solid #808080"></div>
<div class="a m" style="left:755px;top:816px;line-height:16px">CH</div>
<div class="a" style="left:774px;top:812px;width:2px;height:22px;border-left:1px solid #808080;border-right:1px solid #f8fcf8"></div>
<div class="a" style="left:803px;top:812px;width:2px;height:22px;border-left:1px solid #808080;border-right:1px solid #f8fcf8"></div>
<div class="a" style="left:830px;top:812px;width:2px;height:22px;border-left:1px solid #808080;border-right:1px solid #f8fcf8"></div>
<div class="a" style="left:849px;top:806px;width:174px;height:38px;border:1px solid;border-color:#808080 #f8fcf8 #f8fcf8 #808080"></div>
<div class="a" style="left:948px;top:811px;width:54px;text-align:center;line-height:14px;font-size:12px">16:38</div>
<div class="a" style="left:945px;top:827px;width:58px;text-align:center;line-height:14px;font-size:12px">2023/9/22</div>
<div class="a" style="left:782px;top:815px;width:17px;height:15px"><svg width="17" height="15" viewBox="0 0 17 15"><path d="M5 5l3-3 3 1.5 4-2.5" fill="none" stroke="#9a9a9a" stroke-width="1.2"/><rect x="0.8" y="5.8" width="15" height="8" rx="2" fill="#dcdcd6" stroke="#8c8c8c" stroke-width="1.4"/><rect x="3" y="8" width="2" height="1.5" fill="#8c8c8c"/><rect x="6" y="8" width="2" height="1.5" fill="#8c8c8c"/><rect x="9" y="8" width="2" height="1.5" fill="#8c8c8c"/><rect x="12" y="8" width="2" height="1.5" fill="#8c8c8c"/><rect x="5" y="10.5" width="7" height="1.5" fill="#8c8c8c"/></svg></div>
<div class="a" style="left:810px;top:815px;width:16px;height:16px"><svg width="16" height="16" viewBox="0 0 16 16"><circle cx="8" cy="8" r="7.3" fill="#1a2fb0" stroke="#333" stroke-width="0.8"/><circle cx="8" cy="7" r="5" fill="#3050e0" opacity="0.6"/><text x="8" y="12.3" text-anchor="middle" font-family="Liberation Sans" font-weight="bold" font-size="11" fill="#fff">?</text></svg></div>
<div class="a" style="left:837px;top:812px;width:10px;height:9px"><svg width="10" height="9" viewBox="0 0 10 9"><rect x="2.5" y="0.5" width="7" height="4" fill="none" stroke="#000"/><rect x="0.5" y="3.5" width="7" height="5" fill="#d0d0c8" stroke="#000"/><rect x="0.5" y="3.5" width="7" height="1.5" fill="#000"/></svg></div>
<div class="a" style="left:838px;top:826px;width:7px;height:4px"><svg width="7" height="4"><path d="M0 0h7L3.5 4z" fill="#000"/></svg></div>
<div class="a" style="left:855px;top:818px;width:7px;height:10px"><svg width="7" height="10" viewBox="0 0 7 10"><path d="M0.8 4.5L3.5 1.8 6.2 4.5M0.8 8.5L3.5 5.8 6.2 8.5" fill="none" stroke="#000" stroke-width="1.7"/></svg></div>
<div class="a" style="left:871px;top:817px;width:18px;height:17px"><svg width="18" height="17" viewBox="0 0 18 17"><path d="M1.5 5.5h3l4-4.5v14l-4-4h-3z" fill="#f4f4f4" stroke="#707070" stroke-width="1"/><rect x="2" y="6" width="2" height="4" fill="#c8c8c8"/><circle cx="12.5" cy="11.5" r="4.6" fill="#e01818" stroke="#f0b0b0" stroke-width="0.6"/><path d="M10.5 9.5l4 4M14.5 9.5l-4 4" stroke="#fff" stroke-width="1.5"/></svg></div>
<div class="a" style="left:895px;top:817px;width:18px;height:17px"><svg width="18" height="17" viewBox="0 0 18 17"><rect x="6" y="2.5" width="10" height="12" fill="#b8b8b8" stroke="#606060" stroke-width="1"/><rect x="7" y="3.5" width="8" height="10" fill="#d8d8d8"/><path d="M1.5 1v5h5V1" fill="none" stroke="#303030" stroke-width="1.3"/><path d="M2.6 1v4h2.8V1" fill="none" stroke="#fff" stroke-width="0.8"/><path d="M4 6.5v10" stroke="#303030" stroke-width="1.3"/><path d="M12 8.5l5 8H7z" fill="#f8d000" stroke="#a08000" stroke-width="0.5"/><rect x="11.5" y="11" width="1" height="3" fill="#000"/><rect x="11.5" y="15" width="1" height="1" fill="#000"/></svg></div>
<div class="a" style="left:920px;top:817px;width:17px;height:17px"><svg width="17" height="17" viewBox="0 0 17 17"><rect x="0.5" y="0.5" width="2" height="15.5" fill="#e8e8e8" stroke="#707070" stroke-width="0.8"/><path d="M2.5 1.5h7l6 3-2.5 5H2.5z" fill="#f4f4f4" stroke="#909090" stroke-width="0.9"/></svg></div>
<div class="a" style="left:1005px;top:819px;width:16px;height:13px"><svg width="16" height="13" viewBox="0 0 16 13"><defs><linearGradient id="mg" x1="0" y1="0" x2="1" y2="1"><stop offset="0" stop-color="#1850b0"/><stop offset="1" stop-color="#3c9ae8"/></linearGradient></defs><rect x="0.5" y="0.5" width="15" height="12" fill="url(#mg)" stroke="#a8b8c8"/><rect x="1" y="9" width="14" height="3" fill="#202830"/><rect x="1.5" y="9.5" width="2" height="2" fill="#4c8"/></svg></div>

<!-- dialog -->
<div class="a" style="left:330px;top:261px;width:353px;height:292px;background:#d0d0c8;border:1px solid;border-color:#d0d0c8 #404040 #404040 #d0d0c8;box-shadow:inset 1px 1px #f8fcf8,inset -1px -1px #808080"></div>
<div class="a" style="left:332px;top:264px;width:348px;height:18px;background:linear-gradient(90deg,#082468,#a0c8f0)"></div>
<div class="a" style="left:333px;top:265px;font-size:13px;font-weight:bold;color:#f8fcf8;line-height:15px;white-space:nowrap">编辑多字符串</div>
<div class="a push" style="left:662px;top:266px;width:16px;height:14px"><svg class="a" style="left:3px;top:2px" width="9" height="8" viewBox="0 0 9 8"><path d="M0.5 0.5L8 7.5M8 0.5L0.5 7.5" stroke="#000" stroke-width="1.5"/></svg></div>
<div class="a" style="left:341px;top:291px;white-space:nowrap;line-height:14px"><span class="cjk">数值名称</span><span class="m">(N):</span></div>
<div class="a sunk" style="left:341px;top:309px;width:330px;height:19px;background:#d0d0c8"></div>
<div class="a m" style="left:343px;top:313px;line-height:14px">BootExecute</div>
<div class="a" style="left:341px;top:332px;white-space:nowrap;line-height:14px"><span class="cjk">数值数据</span><span class="m">(V):</span></div>
<div class="a sunk" style="left:341px;top:349px;width:330px;height:165px;background:#f8fcf8"></div>
<div class="a" style="left:344px;top:352px;width:1px;height:13px;background:#000"></div>
<div class="a chk" style="left:653px;top:351px;width:16px;height:145px"></div>
<div class="a rais" style="left:653px;top:351px;width:16px;height:16px"><svg class="a" style="left:3px;top:4px" width="8" height="6"><path d="M0 5h7L3.5 1.5z" fill="#808080"/></svg></div>
<div class="a rais" style="left:653px;top:480px;width:16px;height:16px"><svg class="a" style="left:3px;top:5px" width="8" height="6"><path d="M0 0h7L3.5 3.5z" fill="#808080"/></svg></div>
<div class="a chk" style="left:343px;top:496px;width:310px;height:16px"></div>
<div class="a rais" style="left:343px;top:496px;width:16px;height:16px"><svg class="a" style="left:4px;top:3px" width="6" height="8"><path d="M5 0v7L1.5 3.5z" fill="#808080"/></svg></div>
<div class="a rais" style="left:637px;top:496px;width:16px;height:16px"><svg class="a" style="left:5px;top:3px" width="6" height="8"><path d="M0 0v7L3.5 3.5z" fill="#808080"/></svg></div>
<div class="a" style="left:653px;top:496px;width:16px;height:16px;background:#d0d0c8"></div>
<div class="a" style="left:511px;top:519px;width:77px;height:23px;border:1px solid #dcdcd4"></div><div class="a" style="left:512px;top:520px;width:75px;height:21px;border:1px solid #000;background:#d0d0c8"><div class="a push" style="left:0;top:0;width:73px;height:19px"></div></div>
<div class="a" style="left:512px;top:523px;width:75px;text-align:center;line-height:15px;font-size:13px">确定</div>
<div class="a push" style="left:596px;top:520px;width:75px;height:21px"></div>
<div class="a" style="left:596px;top:523px;width:75px;text-align:center;line-height:15px;font-size:13px">取消</div>


<!-- status bar -->
<div class="a" style="left:1px;top:846px;width:1024px;height:28px;background:#f0f0f0"></div>
<div class="a" style="left:5px;top:852px;font-size:12px;line-height:16px;white-space:nowrap">状态: 正在运行</div>
<div class="a" style="left:180px;top:848px;width:1px;height:21px;background:#a0a0a0"></div>
<div class="a" style="left:948px;top:851px;width:21px;height:16px"><svg width="21" height="16" viewBox="0 0 21 16"><rect x="0.5" y="0.5" width="20" height="15" fill="#fff" stroke="#909090"/><rect x="2" y="3" width="17" height="11" fill="#9aa8b8"/><rect x="3" y="5" width="15" height="1" fill="#dfe5ec"/><rect x="3" y="7" width="15" height="1" fill="#dfe5ec"/><rect x="2" y="11" width="17" height="3" fill="#2a2f36"/></svg></div>
<div class="a" style="left:975px;top:850px;width:13px;height:20px"><svg width="13" height="20" viewBox="0 0 13 20"><rect x="0.8" y="0.8" width="11.4" height="18.4" rx="5.7" fill="#8a8a8a" stroke="#111" stroke-width="1.4"/><rect x="5.5" y="3" width="2" height="7" fill="#222"/></svg></div>
<div class="a" style="left:993px;top:851px;width:16px;height:18px"><svg width="16" height="18" viewBox="0 0 16 18"><path d="M3.5 8V5a4.5 4.5 0 0 1 9 0v3" fill="none" stroke="#e8c040" stroke-width="2"/><rect x="0.5" y="8" width="15" height="9.5" fill="#f8cc50" stroke="#d8a830" stroke-width="0.8"/><rect x="1" y="8.5" width="7" height="8.5" fill="#f4e2a8"/></svg></div>
<div class="a" style="left:1012px;top:861px;width:11px;height:11px"><svg width="11" height="11"><rect x="8" y="0" width="2" height="2" fill="#888"/><rect x="5" y="4" width="2" height="2" fill="#888"/><rect x="8" y="4" width="2" height="2" fill="#888"/><rect x="1" y="8" width="2" height="2" fill="#888"/><rect x="5" y="8" width="2" height="2" fill="#888"/><rect x="8" y="8" width="2" height="2" fill="#888"/></svg></div>

</body></html>
